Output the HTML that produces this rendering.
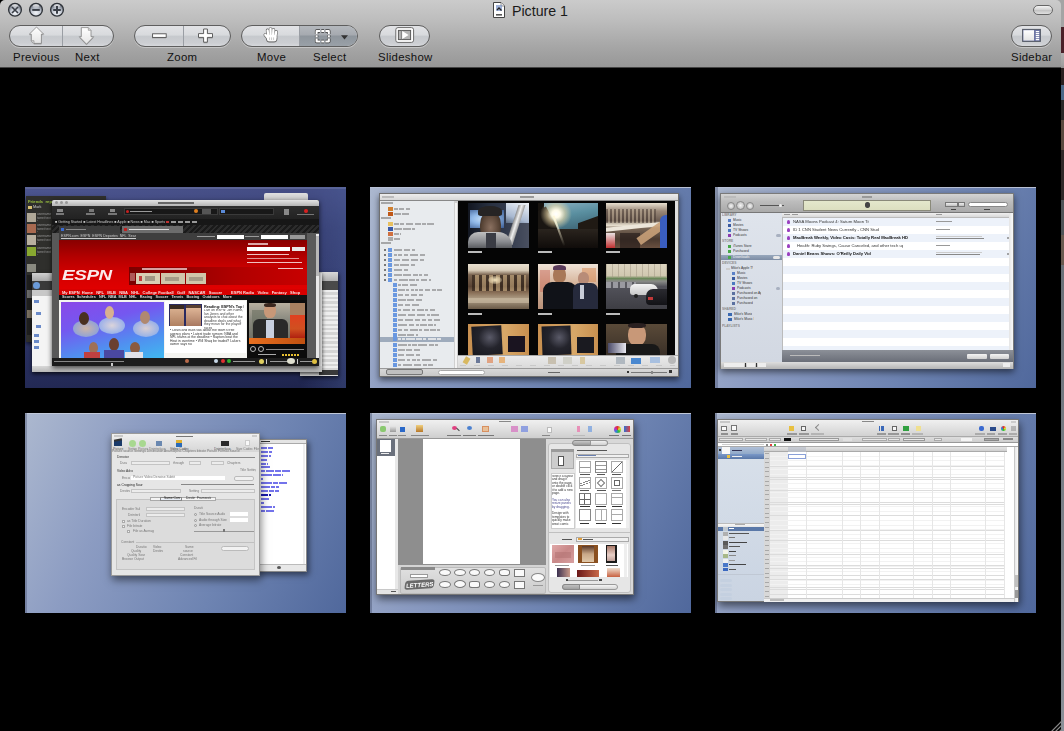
<!DOCTYPE html>
<html><head><meta charset="utf-8">
<style>
*{box-sizing:border-box}
html,body{margin:0;padding:0}
body{width:1064px;height:731px;background:#000;overflow:hidden;position:relative;font-family:"Liberation Sans",sans-serif}
.abs{position:absolute}
#strip{position:absolute;left:1061px;top:0;width:3px;height:731px;background:linear-gradient(#a4a4a4 0,#a4a4a4 27px,#4a2028 27px,#4a2028 53px,#b0b0b0 53px,#a0a0a0 65px,#909090 68px,#2a2020 68px,#2a2020 85px,#4a6888 85px,#4a6888 100px,#2a2828 100px,#2a2828 120px,#5a4a40 120px,#5a4a40 150px,#302828 150px,#302828 200px,#505458 200px,#505458 235px,#6a5a50 235px,#6a5a50 265px,#6a7078 265px,#7a8088 500px,#8a9098 731px)}
#tb{position:absolute;left:0;top:0;width:1061px;height:68px;background:linear-gradient(#cbcbcb,#bdbdbd 30%,#a6a6a6 70%,#979797);border-radius:5px 5px 0 0;border-bottom:1px solid #444}
.tl{position:absolute;top:3px;width:14px;height:14px;border-radius:50%;background:radial-gradient(circle at 50% 35%,#eef0f4 0,#c4c8d0 45%,#8a9098 100%);border:1px solid #555a62;box-shadow:0 1px 0 rgba(255,255,255,.4)}
.title{position:absolute;left:512px;top:2.5px;font-size:14.2px;color:#1a1a1a}
.btn{position:absolute;top:25px;height:22px;border-radius:11px;border:1px solid #5e5e5e;background:linear-gradient(#e2e3e6 0,#d8dadd 46%,#c6c9cd 50%,#ccced2 85%,#d6d8dc 100%);box-shadow:0 1px 0 rgba(255,255,255,.35);overflow:hidden}
.lbl{position:absolute;top:51px;font-size:11.4px;letter-spacing:.3px;color:#111;white-space:nowrap}
.div{position:absolute;top:0;width:1px;height:20px;background:#9a9ea4}
.sel{position:absolute;left:58px;top:0;width:60px;height:20px;background:linear-gradient(#b4b8bd 0,#a6aab0 45%,#8e959c 50%,#9aa1a8 100%)}
.pill{position:absolute;left:1033px;top:5px;width:20px;height:10px;border-radius:5px;border:1px solid #666;background:linear-gradient(#f4f4f4,#d0d0d0 50%,#c4c4c4 55%,#e0e0e0)}
.th{position:absolute;overflow:hidden}
.in{position:absolute;width:1064px;height:731px;filter:blur(.45px)}
.in div{position:absolute}
.in .t{font-size:3px;line-height:3px;white-space:nowrap;overflow:hidden}
</style></head><body>
<div id="strip"></div>
<div style="position:absolute;left:1052px;top:0;width:9px;height:8px;background:#a4a4a4"></div>
<div id="tb">
  <div class="title">Picture 1</div>
  <!-- prev/next -->
  <div class="btn" style="left:9px;width:105px"><div class="div" style="left:52px"></div></div>
  <div class="lbl" style="left:13px">Previous</div>
  <div class="lbl" style="left:75px">Next</div>
  <!-- zoom -->
  <div class="btn" style="left:134px;width:97px"><div class="div" style="left:48px"></div></div>
  <div class="lbl" style="left:167px">Zoom</div>
  <!-- move/select -->
  <div class="btn" style="left:241px;width:117px"><div class="sel"></div><div class="div" style="left:57px"></div></div>
  <div class="lbl" style="left:257px">Move</div>
  <div class="lbl" style="left:313px">Select</div>
  <!-- slideshow -->
  <div class="btn" style="left:379px;width:51px"></div>
  <div class="lbl" style="left:378px">Slideshow</div>
  <!-- sidebar -->
  <div class="btn" style="left:1011px;width:41px"></div>
  <div class="lbl" style="left:1011px">Sidebar</div>
  <div class="pill"></div>
  <svg width="1061" height="68" style="position:absolute;left:0;top:0">
    <defs>
      <radialGradient id="tlg" cx="50%" cy="75%" r="65%">
        <stop offset="0" stop-color="#f2f4f8"/><stop offset=".55" stop-color="#c4cad4"/><stop offset="1" stop-color="#6a707c"/>
      </radialGradient>
      <linearGradient id="hl" x1="0" y1="0" x2="0" y2="1"><stop offset="0" stop-color="#fff" stop-opacity=".95"/><stop offset="1" stop-color="#fff" stop-opacity="0"/></linearGradient>
      <linearGradient id="wf" x1="0" y1="0" x2="0" y2="1"><stop offset="0" stop-color="#ffffff"/><stop offset="1" stop-color="#e4e4e4"/></linearGradient>
    </defs>
    <g stroke="#2e3238" stroke-width="1.3" fill="url(#tlg)">
      <circle cx="15" cy="9.8" r="6.4"/><circle cx="36" cy="9.8" r="6.4"/><circle cx="57" cy="9.8" r="6.4"/>
    </g>
    <g fill="url(#hl)"><ellipse cx="15" cy="6.3" rx="3.2" ry="2"/><ellipse cx="36" cy="6.3" rx="3.2" ry="2"/><ellipse cx="57" cy="6.3" rx="3.2" ry="2"/></g>
    <g stroke="#3a3f47" stroke-width="1.6" stroke-linecap="butt" fill="none">
      <path d="M12 7 L18 13 M18 7 L12 13"/>
      <path d="M32.2 9.9 H39.8" stroke-width="2"/>
      <path d="M53.2 9.9 H60.8 M57 6.1 V13.7" stroke-width="2"/>
    </g>
    <!-- doc icon -->
    <path d="M493.5 2.5 H501 L504.5 6 V17.5 H493.5 Z" fill="#fff" stroke="#444" stroke-width="1"/>
    <path d="M501 2.5 V6 H504.5" fill="#eee" stroke="#666" stroke-width=".7"/>
    <rect x="496" y="5" width="6" height="6" fill="#8aa0d0" opacity=".8"/>
    <path d="M497 10 L499 8 L501.5 10.5" stroke="#222" stroke-width="1.3" fill="none"/>
    <rect x="496" y="14" width="6" height="1.6" fill="#555"/>
    <!-- up arrow -->
    <g transform="translate(0,1)" fill="#7a7a7a" opacity=".55">
      <path d="M36.5 27 L43.7 34.2 H41.4 V43.4 H34 L31.3 40.7 V34.2 H29.3 Z"/>
      <path d="M81.3 27.6 H88.3 L91 30.3 V36.7 H93.7 L86.5 44.2 L79.3 36.7 H81.3 Z"/>
      <rect x="152" y="33.4" width="14" height="4"/>
      <path d="M203.6 29 H207.4 V33.6 H212.5 V37.4 H207.4 V42.2 H203.6 V37.4 H198.5 V33.6 H203.6 Z"/>
    </g>
    <path d="M36.5 27 L43.7 34.2 H41.4 V43.4 H34 L31.3 40.7 V34.2 H29.3 Z" fill="url(#wf)" stroke="#777" stroke-width=".7" stroke-linejoin="round"/>
    <path d="M31.3 40.7 H34 V43.4" fill="#d8d8d8" stroke="#888" stroke-width=".6"/>
    <path d="M81.3 27.6 H88.3 L91 30.3 V36.7 H93.7 L86.5 44.2 L79.3 36.7 H81.3 Z" fill="url(#wf)" stroke="#777" stroke-width=".7" stroke-linejoin="round"/>
    <path d="M88.3 27.6 V30.3 H91" fill="#d8d8d8" stroke="#888" stroke-width=".6"/>
    <!-- minus/plus -->
    <rect x="152.6" y="33.8" width="13.6" height="3.6" fill="#fff" stroke="#505050" stroke-width=".9"/>
    <path d="M203.6 29 H207.4 V33.6 H212.5 V37.4 H207.4 V42.2 H203.6 V37.4 H198.5 V33.6 H203.6 Z" fill="#fff" stroke="#505050" stroke-width=".9" stroke-linejoin="round"/>
    <!-- hand -->
    <g stroke="#6a6a6a" fill="#6a6a6a" stroke-linecap="round">
      <path d="M267.6 30.4 L268.4 37 M270.5 29 L270.7 37 M273.4 29.8 L273 37 M276.2 31.8 L275.2 37.5 M265.3 34.8 L268.4 38.6" stroke-width="3.6" fill="none"/>
      <rect x="266.6" y="34.6" width="10.2" height="7.2" rx="3" stroke-width="1.2"/>
    </g>
    <g stroke="#fff" fill="#fff" stroke-linecap="round">
      <path d="M267.6 30.4 L268.4 37 M270.5 29 L270.7 37 M273.4 29.8 L273 37 M276.2 31.8 L275.2 37.5 M265.3 34.8 L268.4 38.6" stroke-width="2.3" fill="none"/>
      <rect x="266.9" y="35" width="9.6" height="6.4" rx="2.6" stroke="none"/>
    </g>
    <path d="M269.6 37.4 V40 M271.6 37.4 V40 M273.6 37.4 V40" stroke="#b0b0b0" stroke-width=".7"/>
    <path d="M268.2 41.4 H275" stroke="#8a8a8a" stroke-width=".6"/>
    <!-- dashed select -->
    <path d="M316.6 34.0 V31 H320.0 M321.3 31 H324.1 M325.4 31 H328.8 V34.0 M328.8 35.2 V37.3 M328.8 38.5 V41.5 H325.4 M324.1 41.5 H321.3 M320.0 41.5 H316.6 V38.5 M316.6 37.3 V35.2" fill="none" stroke="#3a3a3a" stroke-width="3.4" stroke-linecap="butt" stroke-linejoin="round"/>
    <path d="M316.6 34.0 V31 H320.0 M321.3 31 H324.1 M325.4 31 H328.8 V34.0 M328.8 35.2 V37.3 M328.8 38.5 V41.5 H325.4 M324.1 41.5 H321.3 M320.0 41.5 H316.6 V38.5 M316.6 37.3 V35.2" fill="none" stroke="#fff" stroke-width="2.1" stroke-linecap="butt" stroke-linejoin="round"/>
    <path d="M341 35.3 H348 L344.5 39.4 Z" fill="#333"/>
    <!-- slideshow -->
    <rect x="395.8" y="27.6" width="17.8" height="14.8" rx="2.2" fill="#fff" stroke="#6a6a6a" stroke-width="1"/>
    <rect x="398.4" y="30.4" width="12.2" height="9.2" fill="#b4b4b4" stroke="#5a5a5a" stroke-width="1"/>
    <path d="M401.4 30.4 V39.6" stroke="#777" stroke-width=".8"/>
    <path d="M402.2 31 L408.6 35 L402.2 39 Z" fill="#fff"/>
    <!-- sidebar icon -->
    <rect x="1022.6" y="29.4" width="17.8" height="12" fill="#6c74a4" stroke="#555a66" stroke-width="1"/>
    <rect x="1023.4" y="30.2" width="10.6" height="10.4" fill="url(#wf)"/>
    <g stroke="#fff" stroke-width="1.1"><path d="M1035.8 31.6 H1039.2 M1035.8 33.6 H1039.2 M1035.8 35.6 H1039.2 M1035.8 37.6 H1039.2 M1035.8 39.6 H1039.2"/></g>
  </svg>
</div>

<svg width="14" height="14" style="position:absolute;left:1048px;top:718px"><g stroke="#8a8a8a" stroke-width="1.2"><path d="M3 14 L14 3"/><path d="M7 14 L14 7"/><path d="M11 14 L14 11"/></g></svg>
<div class="th" style="left:25px;top:187px;width:321px;height:201px;background:linear-gradient(175deg,#4d5690 0%,#363e72 30%,#2a3162 70%,#1e244c 100%)">
<div class="in" style="left:-25px;top:-187px">
  <div style="left:25px;top:187px;width:321px;height:2px;background:#5c6496"></div>
  <div style="left:300px;top:187px;width:46px;height:201px;background:linear-gradient(90deg,rgba(80,100,160,0),rgba(80,100,160,.35))"></div>
  <!-- dark twitter window -->
  <div style="left:26px;top:196px;width:80px;height:146px;background:#2f2f2c;box-shadow:0 2px 4px rgba(0,0,0,.6)"></div>
  <div class="t" style="left:28px;top:199px;width:28px;height:5px;font-size:4.2px;line-height:5px;color:#9ac040;font-weight:bold">Friends &nbsp;replies</div>
  <div style="left:28px;top:206px;width:4px;height:3px;background:#d8c070"></div>
  <div class="t" style="left:33px;top:205px;width:16px;height:5px;font-size:3.8px;line-height:5px;color:#ccc">Mark</div>
  <div style="left:27px;top:213px;width:9px;height:9px;background:#b0a898"></div>
  <div style="left:27px;top:224px;width:9px;height:9px;background:#a86a50"></div>
  <div style="left:27px;top:235px;width:9px;height:10px;background:#b8b0a0"></div>
  <div style="left:27px;top:247px;width:9px;height:9px;background:#88a830"></div>
  <div style="left:27px;top:264px;width:9px;height:8px;background:#8a8a80"></div>
  <div class="t" style="left:37px;top:213px;width:16px;height:8px;font-size:3.2px;line-height:3.8px;color:#999;white-space:normal">username tweet text here</div>
  <div class="t" style="left:37px;top:224px;width:16px;height:8px;font-size:3.2px;line-height:3.8px;color:#999;white-space:normal">username tweet text here</div>
  <div class="t" style="left:37px;top:235px;width:16px;height:8px;font-size:3.2px;line-height:3.8px;color:#999;white-space:normal">username tweet text here</div>
  <div class="t" style="left:37px;top:247px;width:16px;height:8px;font-size:3.2px;line-height:3.8px;color:#999;white-space:normal">username tweet text here</div>
  <div style="left:27px;top:275px;width:6px;height:60px;background:#1e1e1e"></div>
  <div style="left:27px;top:290px;width:5px;height:8px;background:#6a6a6a"></div>
  <div style="left:27px;top:310px;width:5px;height:8px;background:#7a7060"></div>
  <!-- small top-right window -->
  <div style="left:264px;top:193px;width:44px;height:10px;background:linear-gradient(#e0e0e0,#bcbcbc);border-radius:2px 2px 0 0"></div>
  <!-- right back window -->
  <div style="left:300px;top:272px;width:38px;height:104px;background:#dcdcdc;box-shadow:1px 2px 4px rgba(0,0,0,.6)"></div>
  <div style="left:300px;top:272px;width:38px;height:9px;background:linear-gradient(#d8d8d8,#b0b0b0)"></div>
  <div style="left:300px;top:281px;width:38px;height:9px;background:#4a4a4a"></div>
  <div style="left:319px;top:290px;width:19px;height:80px;background:repeating-linear-gradient(#eeeeee 0,#eeeeee 2px,#d4d4d4 2px,#d4d4d4 4.5px)"></div>
  <div style="left:319px;top:370px;width:19px;height:5px;background:#3a3a3a"></div>
  <!-- bottom-left white window -->
  <div style="left:32px;top:273px;width:290px;height:99px;background:#e8e8e8;box-shadow:0 2px 4px rgba(0,0,0,.7)"></div>
  <div style="left:32px;top:273px;width:20px;height:8px;background:linear-gradient(#d0d0d0,#a8a8a8)"></div>
  <div style="left:32px;top:281px;width:20px;height:9px;background:#3a3a3a"></div>
  <div style="left:33px;top:282px;width:7px;height:7px;border-radius:50%;background:#6a9ad8"></div>
  <div style="left:32px;top:290px;width:20px;height:6px;background:#c8c8c8"></div>
  <div style="left:32px;top:296px;width:20px;height:74px;background:#f4f4f4"></div>
  <div style="left:34px;top:300px;width:5px;height:3px;background:#6a8ac8"></div>
  <div style="left:36px;top:312px;width:5px;height:3px;background:#6a8ac8"></div>
  <div style="left:36px;top:325px;width:5px;height:3px;background:#6a8ac8"></div>
  <div style="left:34px;top:334px;width:5px;height:3px;background:#6a8ac8"></div>
  <div style="left:34px;top:340px;width:5px;height:3px;background:#6a8ac8"></div>
  <div style="left:34px;top:346px;width:5px;height:3px;background:#6a8ac8"></div>
  <div style="left:32px;top:366px;width:290px;height:6px;background:linear-gradient(#d8d8d8,#b8b8b8)"></div>
  <!-- browser -->
  <div style="left:52px;top:200px;width:267px;height:166px;background:#333;box-shadow:0 2px 5px rgba(0,0,0,.7)"></div>
  <div style="left:52px;top:200px;width:267px;height:6px;background:linear-gradient(#e4e4e4,#b4b4b4);border-radius:2px 2px 0 0"></div>
  <div style="left:55px;top:201px;width:3px;height:3px;border-radius:50%;background:#999"></div>
  <div style="left:60px;top:201px;width:3px;height:3px;border-radius:50%;background:#999"></div>
  <div style="left:65px;top:201px;width:3px;height:3px;border-radius:50%;background:#999"></div>
  <div style="left:158px;top:202px;width:36px;height:2px;background:#666"></div>
  <div style="left:52px;top:206px;width:267px;height:13px;background:linear-gradient(#2e2e2e,#222)"></div>
  <div style="left:57px;top:209px;width:6px;height:3px;background:#888"></div>
  <div style="left:56px;top:213px;width:8px;height:2px;background:#777"></div>
  <div style="left:89px;top:209px;width:5px;height:3px;background:#777"></div>
  <div style="left:86px;top:213px;width:9px;height:2px;background:#777"></div>
  <div style="left:110px;top:209px;width:5px;height:3px;background:#888"></div>
  <div style="left:108px;top:213px;width:9px;height:2px;background:#777"></div>
  <div style="left:124px;top:208px;width:94px;height:7px;background:#181818;border:1px solid #3a3a3a"></div>
  <div style="left:126px;top:210px;width:3px;height:3px;background:#c82020;border-radius:50%"></div>
  <div style="left:130px;top:211px;width:22px;height:1px;background:#999"></div>
  <div style="left:194px;top:209px;width:4px;height:4px;background:#e08020;border-radius:50%"></div>
  <div style="left:202px;top:209px;width:9px;height:5px;background:#555"></div>
  <div style="left:219px;top:208px;width:55px;height:7px;background:#181818;border:1px solid #3a3a3a"></div>
  <div style="left:221px;top:210px;width:4px;height:3px;background:#5a8ad8"></div>
  <div style="left:284px;top:209px;width:5px;height:6px;background:#888"></div>
  <div style="left:304px;top:209px;width:4px;height:4px;background:#d82020;border-radius:50%"></div>
  <div style="left:297px;top:214px;width:17px;height:1px;background:#777"></div>
  <div style="left:52px;top:219px;width:267px;height:6px;background:#171717"></div>
  <div class="t" style="left:55px;top:220px;width:112px;height:5px;font-size:3.6px;line-height:5px;color:#ccc">&#9632; Getting Started &#9632; Latest Headlines &#9632; Apple &#9632; News &#9632; Mac &#9632; Sports &#9632; Music &#9632; ...</div>
  <div style="left:166px;top:221px;width:3px;height:2px;background:#c03030"></div>
  <div style="left:171px;top:221px;width:28px;height:2px;background:repeating-linear-gradient(90deg,#999 0,#999 5px,transparent 5px,transparent 7px)"></div>
  <div style="left:52px;top:225px;width:267px;height:8px;background:repeating-linear-gradient(135deg,#2c2c2c 0,#2c2c2c 2px,#1a1a1a 2px,#1a1a1a 4px)"></div>
  <div style="left:59px;top:226px;width:61px;height:7px;background:#3c3c3c"></div>
  <div style="left:61px;top:228px;width:3px;height:3px;background:#3a6ad0"></div>
  <div style="left:66px;top:229px;width:20px;height:1px;background:#888"></div>
  <div style="left:122px;top:226px;width:61px;height:7px;background:#6c6c6c"></div>
  <div style="left:124px;top:228px;width:3px;height:3px;background:#c02020"></div>
  <div style="left:129px;top:229px;width:40px;height:1px;background:#ddd"></div>
  <div style="left:52px;top:233px;width:7px;height:125px;background:#585858"></div>
  <div style="left:59px;top:233px;width:248px;height:7px;background:#3e3e3e"></div>
  <div class="t" style="left:61px;top:234px;width:75px;height:5px;font-size:3.6px;line-height:5px;color:#ccc;text-decoration:underline">ESPN.com &nbsp;ESPN &nbsp;ESPN Deportes &nbsp;NFL &nbsp;Search ESPN</div>
  <div style="left:217px;top:235px;width:27px;height:4px;background:#fff"></div>
  <div style="left:261px;top:235px;width:27px;height:4px;background:#fff"></div>
  <div style="left:290px;top:235px;width:15px;height:4px;background:#999"></div>
  <div style="left:197px;top:236px;width:18px;height:1px;background:#999"></div>
  <div style="left:245px;top:236px;width:14px;height:1px;background:#999"></div>
  <!-- red header -->
  <div style="left:59px;top:240px;width:248px;height:49px;background:linear-gradient(#880000 0%,#b40000 35%,#d40000 70%,#e00000 100%)"></div>
  <div style="left:62px;top:268px;width:60px;height:14px;color:#fff;font:italic 900 14px/14px 'Liberation Sans',sans-serif;letter-spacing:-0.3px;transform:scaleX(1.35);transform-origin:0 0;opacity:.92">ESPN</div>
  <div style="left:129px;top:267px;width:178px;height:18px;background:linear-gradient(90deg,#7a0000,#b00000 60%,#c80000)"></div>
  <div style="left:142px;top:268px;width:45px;height:2px;background:#e8c8c8;opacity:.8"></div>
  <div style="left:136px;top:273px;width:24px;height:11px;background:#d8cfb4"></div>
  <div style="left:161px;top:273px;width:24px;height:11px;background:#d0c6aa"></div>
  <div style="left:186px;top:273px;width:20px;height:11px;background:#d0c6aa"></div>
  <div style="left:139px;top:276px;width:3px;height:5px;background:#c04040"></div>
  <div style="left:145px;top:276px;width:10px;height:5px;background:#8a8070;opacity:.7"></div>
  <div style="left:165px;top:277px;width:14px;height:4px;background:#8a8070;opacity:.6"></div>
  <div style="left:189px;top:277px;width:14px;height:4px;background:#8a8070;opacity:.6"></div>
  <div style="left:130px;top:273px;width:5px;height:8px;background:#e0b0b0;opacity:.5"></div>
  <div style="left:248px;top:243px;width:20px;height:2px;background:#f0d0d0;opacity:.8"></div>
  <div style="left:247px;top:247px;width:43px;height:4px;background:#fff"></div>
  <div style="left:292px;top:247px;width:13px;height:4px;background:#e8e8e8"></div>
  <div style="left:247px;top:254px;width:42px;height:1px;background:#f0c0c0"></div>
  <div style="left:247px;top:258px;width:52px;height:1px;background:#e09090"></div>
  <div style="left:247px;top:262px;width:55px;height:1px;background:#f0c0c0"></div>
  <div style="left:278px;top:268px;width:25px;height:1px;background:#f0c0c0"></div>
  <!-- nav -->
  <div style="left:59px;top:289px;width:248px;height:6px;background:#d80000"></div>
  <div class="t" style="left:62px;top:290px;width:244px;height:5px;font-size:4px;line-height:5px;color:#f8e0e0;font-weight:bold">My ESPN &nbsp;Home &nbsp;&nbsp;NFL &nbsp;&nbsp;MLB &nbsp;&nbsp;NBA &nbsp;&nbsp;NHL &nbsp;&nbsp;College Football &nbsp;&nbsp;Golf &nbsp;&nbsp;NASCAR &nbsp;&nbsp;Soccer &nbsp;&nbsp;&nbsp;&nbsp;&nbsp;&nbsp;&nbsp;ESPN Radio &nbsp;&nbsp;Video &nbsp;&nbsp;Fantasy &nbsp;&nbsp;Shop</div>
  <div style="left:59px;top:295px;width:248px;height:5px;background:#121212"></div>
  <div class="t" style="left:62px;top:295px;width:244px;height:5px;font-size:3.8px;line-height:5px;color:#ddd;font-weight:bold">Scores &nbsp;Schedules &nbsp;&nbsp;NFL &nbsp;NBA &nbsp;MLB &nbsp;NHL &nbsp;&nbsp;Racing &nbsp;&nbsp;Soccer &nbsp;&nbsp;Tennis &nbsp;&nbsp;Boxing &nbsp;&nbsp;Outdoors &nbsp;&nbsp;More</div>
  <!-- content -->
  <div style="left:59px;top:300px;width:248px;height:58px;background:#f4f4f0"></div>
  <div style="left:61px;top:302px;width:103px;height:56px;background:linear-gradient(165deg,#8a48e8 0%,#7458f0 35%,#5090f0 70%,#40b8f0 100%)"></div>
  <div style="left:73px;top:320px;width:26px;height:17px;border-radius:50%;background:radial-gradient(#d8c0a0,#7aa0e8);opacity:.9"></div>
  <div style="left:99px;top:317px;width:26px;height:17px;border-radius:50%;background:radial-gradient(#e8e0d8,#80a8f0);opacity:.9"></div>
  <div style="left:133px;top:320px;width:26px;height:17px;border-radius:50%;background:radial-gradient(#e8d8d0,#80a8f0);opacity:.9"></div>
  <div style="left:79px;top:312px;width:10px;height:13px;border-radius:50%;background:#4a3020"></div>
  <div style="left:105px;top:306px;width:9px;height:13px;border-radius:50%;background:#d8b090"></div>
  <div style="left:140px;top:311px;width:10px;height:13px;border-radius:50%;background:#b08870"></div>
  <div style="left:89px;top:342px;width:9px;height:12px;border-radius:50%;background:#a07058"></div>
  <div style="left:109px;top:338px;width:10px;height:13px;border-radius:50%;background:#6a4030"></div>
  <div style="left:130px;top:342px;width:10px;height:12px;border-radius:50%;background:#8a5a40"></div>
  <div style="left:104px;top:350px;width:20px;height:8px;background:#4a48a0"></div>
  <div style="left:84px;top:352px;width:16px;height:6px;background:#c04040"></div>
  <div style="left:125px;top:352px;width:18px;height:6px;background:#e0e0e8"></div>
  <div style="left:165px;top:301px;width:81px;height:52px;background:#fff"></div>
  <div style="left:169px;top:304px;width:33px;height:22px;background:#2a2a60"></div>
  <div style="left:170px;top:305px;width:14px;height:21px;background:linear-gradient(#e0b898,#b08060)"></div>
  <div style="left:186px;top:305px;width:15px;height:21px;background:linear-gradient(#e8c0a0,#a87860)"></div>
  <div style="left:170px;top:305px;width:14px;height:4px;background:#3a2a20"></div>
  <div style="left:186px;top:305px;width:15px;height:3px;background:#5a4030"></div>
  <div class="t" style="left:204px;top:304.5px;width:40px;height:5px;font-size:3.8px;line-height:5px;color:#111;font-weight:bold">Reading: ESPN&#39;s Top News</div>
  <div class="t" style="left:204px;top:309px;width:40px;height:20px;font-size:3.4px;line-height:3.6px;color:#444;white-space:normal">Live on ESPN: Jim Rome, Ian Jones and other analysts to chat about the deadline deals and what they mean for the playoff races</div>
  <div class="t" style="left:170px;top:329px;width:74px;height:20px;font-size:3.4px;line-height:3.6px;color:#333;white-space:normal">&#8226; Davis and Bulls talk about the team&#39;s free agency plans &#8226; Latest trade rumors: NBA and NFL teams at the deadline &#8226; Raptors beat the Heat in overtime &#8226; Will Shaq be traded? Lakers owner says no</div>
  <div style="left:247px;top:300px;width:60px;height:59px;background:#0c0c0c"></div>
  <div style="left:249px;top:303px;width:56px;height:41px;background:linear-gradient(#b8b0a0,#8a8a80 40%,#6a6a60)"></div>
  <div style="left:252px;top:310px;width:15px;height:26px;background:#6a7060;opacity:.6"></div>
  <div style="left:264px;top:304px;width:12px;height:14px;border-radius:45%;background:#c89878"></div>
  <div style="left:264px;top:303px;width:12px;height:4px;border-radius:40%;background:#3a2820"></div>
  <div style="left:253px;top:319px;width:35px;height:19px;border-radius:6px 6px 0 0;background:#2a2a2a"></div>
  <div style="left:266px;top:320px;width:8px;height:18px;background:#c8d0e0"></div>
  <div style="left:290px;top:303px;width:15px;height:12px;background:#a88060"></div>
  <div style="left:290px;top:315px;width:15px;height:23px;background:linear-gradient(#e04020,#d05020 60%,#b02010)"></div>
  <div style="left:249px;top:338px;width:56px;height:6px;background:linear-gradient(90deg,#e87020,#c05010)"></div>
  <div style="left:250px;top:346px;width:6px;height:6px;border-radius:50%;border:1px solid #bbb"></div>
  <div style="left:258px;top:346px;width:6px;height:6px;border-radius:50%;border:1px solid #bbb"></div>
  <div style="left:266px;top:349px;width:38px;height:1px;background:#888"></div>
  <div style="left:258px;top:354px;width:18px;height:1px;background:#aaa"></div>
  <div style="left:282px;top:354px;width:17px;height:2px;background:repeating-linear-gradient(90deg,#e8c030 0,#e8c030 2px,transparent 2px,transparent 3px)"></div>
  <div style="left:307px;top:233px;width:12px;height:125px;background:#5a5a5a"></div>
  <div style="left:316px;top:234px;width:3px;height:124px;background:#e8e8e8"></div>
  <div style="left:316px;top:236px;width:3px;height:40px;background:#b8b8b8"></div>
  <!-- status bar -->
  <div style="left:52px;top:358px;width:267px;height:8px;background:#1c1c1c"></div>
  <div style="left:54px;top:361px;width:70px;height:1px;background:#888"></div>
  <div style="left:111px;top:363px;width:2px;height:3px;background:#ccc"></div>
  <div style="left:185px;top:359px;width:4px;height:4px;border-radius:50%;background:#b86a4a"></div>
  <div style="left:214px;top:359px;width:4px;height:4px;border-radius:50%;background:#c8d8e8"></div>
  <div style="left:221px;top:359px;width:4px;height:4px;border-radius:50%;background:#e03030"></div>
  <div style="left:227px;top:359px;width:4px;height:4px;border-radius:50%;background:#30b030"></div>
  <div style="left:233px;top:361px;width:22px;height:1px;background:#999"></div>
  <div style="left:259px;top:359px;width:5px;height:5px;border-radius:50%;background:#e0d060"></div>
  <div style="left:266px;top:359px;width:1px;height:5px;background:#ccc"></div>
  <div style="left:270px;top:361px;width:18px;height:1px;background:#999"></div>
  <div style="left:287px;top:358px;width:8px;height:6px;border-radius:50%;background:#e0e0d0"></div>
  <div style="left:297px;top:359px;width:1px;height:5px;background:#ccc"></div>
  <div style="left:300px;top:361px;width:12px;height:1px;background:#999"></div>
  <div style="left:312px;top:359px;width:5px;height:5px;border-radius:50%;background:#e0c040"></div>
</div></div>

<div class="th" style="left:370px;top:187px;width:321px;height:201px;background:linear-gradient(115deg,#acb8cf 0%,#8c9cc2 30%,#6e84b2 65%,#50689c 100%)">
<div class="in" style="left:-370px;top:-187px">
  <div style="left:370px;top:187px;width:321px;height:1px;background:#b8c0d4"></div>
  <!-- window -->
  <div style="left:379px;top:193px;width:300px;height:184px;background:#d8d8d8;border:1px solid #707070;box-shadow:0 3px 6px rgba(0,0,0,.55)"></div>
  <div style="left:380px;top:194px;width:298px;height:7px;background:linear-gradient(#ececec,#d4d4d4)"></div>
  <div style="left:382px;top:196px;width:12px;height:2px;background:#bbb"></div>
  <div style="left:520px;top:196px;width:14px;height:2px;background:#999"></div>
  <div style="left:380px;top:200px;width:298px;height:1px;background:#888"></div>
  <!-- sidebar -->
  <div style="left:380px;top:201px;width:77px;height:167px;background:#e8ebee"></div>
  <div style="left:454px;top:201px;width:4px;height:167px;background:#d0d0d0"></div>
  <div style="left:455px;top:203px;width:2px;height:165px;background:#f4f4f4"></div>
  <div style="left:381px;top:202px;width:12px;height:2px;background:#8a8a8a;opacity:.7"></div>
  <div style="left:381px;top:217px;width:10px;height:2px;background:#8a8a8a;opacity:.7"></div>
  <div style="left:381px;top:242px;width:10px;height:2px;background:#8a8a8a;opacity:.7"></div>
  <div style="left:388px;top:207px;width:5px;height:4px;background:#d08030"></div>
  <div style="left:394px;top:208px;width:4px;height:2px;background:#6a6a6a;opacity:.5"></div>
  <div style="left:399px;top:208px;width:5px;height:2px;background:#6a6a6a;opacity:.5"></div>
  <div style="left:406px;top:208px;width:4px;height:2px;background:#6a6a6a;opacity:.5"></div>
  <div style="left:388px;top:212px;width:5px;height:4px;background:#c05818"></div>
  <div style="left:394px;top:213px;width:7px;height:2px;background:#6a6a6a;opacity:.5"></div>
  <div style="left:402px;top:213px;width:7px;height:2px;background:#6a6a6a;opacity:.5"></div>
  <div style="left:388px;top:222px;width:5px;height:4px;background:#e8c060"></div>
  <div style="left:394px;top:223px;width:5px;height:2px;background:#6a6a6a;opacity:.5"></div>
  <div style="left:400px;top:223px;width:4px;height:2px;background:#6a6a6a;opacity:.5"></div>
  <div style="left:406px;top:223px;width:7px;height:2px;background:#6a6a6a;opacity:.5"></div>
  <div style="left:415px;top:223px;width:6px;height:2px;background:#6a6a6a;opacity:.5"></div>
  <div style="left:422px;top:223px;width:4px;height:2px;background:#6a6a6a;opacity:.5"></div>
  <div style="left:427px;top:223px;width:7px;height:2px;background:#6a6a6a;opacity:.5"></div>
  <div style="left:388px;top:227px;width:5px;height:4px;background:#3a5aa8"></div>
  <div style="left:394px;top:228px;width:8px;height:2px;background:#6a6a6a;opacity:.5"></div>
  <div style="left:403px;top:228px;width:8px;height:2px;background:#6a6a6a;opacity:.5"></div>
  <div style="left:412px;top:228px;width:3px;height:2px;background:#6a6a6a;opacity:.5"></div>
  <div style="left:388px;top:232px;width:5px;height:4px;background:#d07040"></div>
  <div style="left:394px;top:233px;width:5px;height:2px;background:#6a6a6a;opacity:.5"></div>
  <div style="left:400px;top:233px;width:1px;height:2px;background:#6a6a6a;opacity:.5"></div>
  <div style="left:388px;top:237px;width:5px;height:4px;background:#aaa"></div>
  <div style="left:394px;top:238px;width:6px;height:2px;background:#6a6a6a;opacity:.5"></div>
  <div style="left:384px;top:249px;width:2px;height:2px;background:#777"></div>
  <div style="left:388px;top:248px;width:4px;height:4px;background:#6a98e0"></div>
  <div style="left:394px;top:249px;width:8px;height:2px;background:#6a6a6a;opacity:.5"></div>
  <div style="left:404px;top:249px;width:6px;height:2px;background:#6a6a6a;opacity:.5"></div>
  <div style="left:412px;top:249px;width:3px;height:2px;background:#6a6a6a;opacity:.5"></div>
  <div style="left:384px;top:254px;width:2px;height:2px;background:#777"></div>
  <div style="left:388px;top:253px;width:4px;height:4px;background:#6a98e0"></div>
  <div style="left:394px;top:254px;width:3px;height:2px;background:#6a6a6a;opacity:.5"></div>
  <div style="left:398px;top:254px;width:4px;height:2px;background:#6a6a6a;opacity:.5"></div>
  <div style="left:404px;top:254px;width:4px;height:2px;background:#6a6a6a;opacity:.5"></div>
  <div style="left:410px;top:254px;width:8px;height:2px;background:#6a6a6a;opacity:.5"></div>
  <div style="left:420px;top:254px;width:5px;height:2px;background:#6a6a6a;opacity:.5"></div>
  <div style="left:384px;top:259px;width:2px;height:2px;background:#777"></div>
  <div style="left:388px;top:258px;width:4px;height:4px;background:#6a98e0"></div>
  <div style="left:394px;top:259px;width:6px;height:2px;background:#6a6a6a;opacity:.5"></div>
  <div style="left:402px;top:259px;width:7px;height:2px;background:#6a6a6a;opacity:.5"></div>
  <div style="left:411px;top:259px;width:7px;height:2px;background:#6a6a6a;opacity:.5"></div>
  <div style="left:420px;top:259px;width:4px;height:2px;background:#6a6a6a;opacity:.5"></div>
  <div style="left:384px;top:264px;width:2px;height:2px;background:#777"></div>
  <div style="left:388px;top:263px;width:4px;height:4px;background:#6a98e0"></div>
  <div style="left:394px;top:264px;width:5px;height:2px;background:#6a6a6a;opacity:.5"></div>
  <div style="left:400px;top:264px;width:9px;height:2px;background:#6a6a6a;opacity:.5"></div>
  <div style="left:411px;top:264px;width:4px;height:2px;background:#6a6a6a;opacity:.5"></div>
  <div style="left:384px;top:269px;width:2px;height:2px;background:#777"></div>
  <div style="left:388px;top:268px;width:4px;height:4px;background:#6a98e0"></div>
  <div style="left:394px;top:269px;width:8px;height:2px;background:#6a6a6a;opacity:.5"></div>
  <div style="left:404px;top:269px;width:4px;height:2px;background:#6a6a6a;opacity:.5"></div>
  <div style="left:384px;top:274px;width:2px;height:2px;background:#777"></div>
  <div style="left:388px;top:273px;width:4px;height:4px;background:#6a98e0"></div>
  <div style="left:394px;top:274px;width:8px;height:2px;background:#6a6a6a;opacity:.5"></div>
  <div style="left:403px;top:274px;width:8px;height:2px;background:#6a6a6a;opacity:.5"></div>
  <div style="left:413px;top:274px;width:5px;height:2px;background:#6a6a6a;opacity:.5"></div>
  <div style="left:419px;top:274px;width:3px;height:2px;background:#6a6a6a;opacity:.5"></div>
  <div style="left:424px;top:274px;width:4px;height:2px;background:#6a6a6a;opacity:.5"></div>
  <div style="left:384px;top:279px;width:2px;height:2px;background:#777"></div>
  <div style="left:388px;top:278px;width:4px;height:4px;background:#6a98e0"></div>
  <div style="left:394px;top:279px;width:3px;height:2px;background:#6a6a6a;opacity:.5"></div>
  <div style="left:399px;top:279px;width:9px;height:2px;background:#6a6a6a;opacity:.5"></div>
  <div style="left:409px;top:279px;width:6px;height:2px;background:#6a6a6a;opacity:.5"></div>
  <div style="left:416px;top:279px;width:3px;height:2px;background:#6a6a6a;opacity:.5"></div>
  <div style="left:421px;top:279px;width:6px;height:2px;background:#6a6a6a;opacity:.5"></div>
  <div style="left:429px;top:279px;width:2px;height:2px;background:#6a6a6a;opacity:.5"></div>
  <div style="left:393px;top:283px;width:4px;height:4px;background:#6a98e0"></div>
  <div style="left:398px;top:284px;width:3px;height:2px;background:#6a6a6a;opacity:.5"></div>
  <div style="left:402px;top:284px;width:6px;height:2px;background:#6a6a6a;opacity:.5"></div>
  <div style="left:410px;top:284px;width:7px;height:2px;background:#6a6a6a;opacity:.5"></div>
  <div style="left:393px;top:288px;width:4px;height:4px;background:#6a98e0"></div>
  <div style="left:398px;top:289px;width:7px;height:2px;background:#6a6a6a;opacity:.5"></div>
  <div style="left:406px;top:289px;width:3px;height:2px;background:#6a6a6a;opacity:.5"></div>
  <div style="left:411px;top:289px;width:3px;height:2px;background:#6a6a6a;opacity:.5"></div>
  <div style="left:415px;top:289px;width:3px;height:2px;background:#6a6a6a;opacity:.5"></div>
  <div style="left:419px;top:289px;width:4px;height:2px;background:#6a6a6a;opacity:.5"></div>
  <div style="left:425px;top:289px;width:5px;height:2px;background:#6a6a6a;opacity:.5"></div>
  <div style="left:432px;top:289px;width:4px;height:2px;background:#6a6a6a;opacity:.5"></div>
  <div style="left:437px;top:289px;width:5px;height:2px;background:#6a6a6a;opacity:.5"></div>
  <div style="left:393px;top:293px;width:4px;height:4px;background:#6a98e0"></div>
  <div style="left:398px;top:294px;width:5px;height:2px;background:#6a6a6a;opacity:.5"></div>
  <div style="left:405px;top:294px;width:4px;height:2px;background:#6a6a6a;opacity:.5"></div>
  <div style="left:411px;top:294px;width:6px;height:2px;background:#6a6a6a;opacity:.5"></div>
  <div style="left:419px;top:294px;width:4px;height:2px;background:#6a6a6a;opacity:.5"></div>
  <div style="left:393px;top:298px;width:4px;height:4px;background:#6a98e0"></div>
  <div style="left:398px;top:299px;width:8px;height:2px;background:#6a6a6a;opacity:.5"></div>
  <div style="left:407px;top:299px;width:7px;height:2px;background:#6a6a6a;opacity:.5"></div>
  <div style="left:416px;top:299px;width:6px;height:2px;background:#6a6a6a;opacity:.5"></div>
  <div style="left:393px;top:303px;width:4px;height:4px;background:#6a98e0"></div>
  <div style="left:398px;top:304px;width:5px;height:2px;background:#6a6a6a;opacity:.5"></div>
  <div style="left:405px;top:304px;width:5px;height:2px;background:#6a6a6a;opacity:.5"></div>
  <div style="left:412px;top:304px;width:7px;height:2px;background:#6a6a6a;opacity:.5"></div>
  <div style="left:393px;top:308px;width:4px;height:4px;background:#6a98e0"></div>
  <div style="left:398px;top:309px;width:3px;height:2px;background:#6a6a6a;opacity:.5"></div>
  <div style="left:403px;top:309px;width:7px;height:2px;background:#6a6a6a;opacity:.5"></div>
  <div style="left:412px;top:309px;width:3px;height:2px;background:#6a6a6a;opacity:.5"></div>
  <div style="left:417px;top:309px;width:7px;height:2px;background:#6a6a6a;opacity:.5"></div>
  <div style="left:425px;top:309px;width:3px;height:2px;background:#6a6a6a;opacity:.5"></div>
  <div style="left:430px;top:309px;width:5px;height:2px;background:#6a6a6a;opacity:.5"></div>
  <div style="left:393px;top:313px;width:4px;height:4px;background:#6a98e0"></div>
  <div style="left:398px;top:314px;width:8px;height:2px;background:#6a6a6a;opacity:.5"></div>
  <div style="left:408px;top:314px;width:7px;height:2px;background:#6a6a6a;opacity:.5"></div>
  <div style="left:417px;top:314px;width:8px;height:2px;background:#6a6a6a;opacity:.5"></div>
  <div style="left:427px;top:314px;width:3px;height:2px;background:#6a6a6a;opacity:.5"></div>
  <div style="left:431px;top:314px;width:8px;height:2px;background:#6a6a6a;opacity:.5"></div>
  <div style="left:393px;top:318px;width:4px;height:4px;background:#6a98e0"></div>
  <div style="left:398px;top:319px;width:5px;height:2px;background:#6a6a6a;opacity:.5"></div>
  <div style="left:405px;top:319px;width:8px;height:2px;background:#6a6a6a;opacity:.5"></div>
  <div style="left:415px;top:319px;width:5px;height:2px;background:#6a6a6a;opacity:.5"></div>
  <div style="left:422px;top:319px;width:4px;height:2px;background:#6a6a6a;opacity:.5"></div>
  <div style="left:428px;top:319px;width:4px;height:2px;background:#6a6a6a;opacity:.5"></div>
  <div style="left:434px;top:319px;width:6px;height:2px;background:#6a6a6a;opacity:.5"></div>
  <div style="left:393px;top:323px;width:4px;height:4px;background:#6a98e0"></div>
  <div style="left:398px;top:324px;width:9px;height:2px;background:#6a6a6a;opacity:.5"></div>
  <div style="left:409px;top:324px;width:5px;height:2px;background:#6a6a6a;opacity:.5"></div>
  <div style="left:416px;top:324px;width:3px;height:2px;background:#6a6a6a;opacity:.5"></div>
  <div style="left:420px;top:324px;width:7px;height:2px;background:#6a6a6a;opacity:.5"></div>
  <div style="left:428px;top:324px;width:5px;height:2px;background:#6a6a6a;opacity:.5"></div>
  <div style="left:434px;top:324px;width:2px;height:2px;background:#6a6a6a;opacity:.5"></div>
  <div style="left:393px;top:328px;width:4px;height:4px;background:#6a98e0"></div>
  <div style="left:398px;top:329px;width:4px;height:2px;background:#6a6a6a;opacity:.5"></div>
  <div style="left:404px;top:329px;width:4px;height:2px;background:#6a6a6a;opacity:.5"></div>
  <div style="left:410px;top:329px;width:8px;height:2px;background:#6a6a6a;opacity:.5"></div>
  <div style="left:419px;top:329px;width:3px;height:2px;background:#6a6a6a;opacity:.5"></div>
  <div style="left:424px;top:329px;width:5px;height:2px;background:#6a6a6a;opacity:.5"></div>
  <div style="left:430px;top:329px;width:6px;height:2px;background:#6a6a6a;opacity:.5"></div>
  <div style="left:437px;top:329px;width:3px;height:2px;background:#6a6a6a;opacity:.5"></div>
  <div style="left:393px;top:333px;width:4px;height:4px;background:#6a98e0"></div>
  <div style="left:398px;top:334px;width:8px;height:2px;background:#6a6a6a;opacity:.5"></div>
  <div style="left:407px;top:334px;width:7px;height:2px;background:#6a6a6a;opacity:.5"></div>
  <div style="left:416px;top:334px;width:2px;height:2px;background:#6a6a6a;opacity:.5"></div>
  <div style="left:393px;top:343px;width:4px;height:4px;background:#6a98e0"></div>
  <div style="left:398px;top:344px;width:9px;height:2px;background:#6a6a6a;opacity:.5"></div>
  <div style="left:408px;top:344px;width:3px;height:2px;background:#6a6a6a;opacity:.5"></div>
  <div style="left:412px;top:344px;width:5px;height:2px;background:#6a6a6a;opacity:.5"></div>
  <div style="left:418px;top:344px;width:9px;height:2px;background:#6a6a6a;opacity:.5"></div>
  <div style="left:429px;top:344px;width:5px;height:2px;background:#6a6a6a;opacity:.5"></div>
  <div style="left:435px;top:344px;width:3px;height:2px;background:#6a6a6a;opacity:.5"></div>
  <div style="left:393px;top:348px;width:4px;height:4px;background:#6a98e0"></div>
  <div style="left:398px;top:349px;width:7px;height:2px;background:#6a6a6a;opacity:.5"></div>
  <div style="left:406px;top:349px;width:6px;height:2px;background:#6a6a6a;opacity:.5"></div>
  <div style="left:414px;top:349px;width:6px;height:2px;background:#6a6a6a;opacity:.5"></div>
  <div style="left:393px;top:353px;width:4px;height:4px;background:#6a98e0"></div>
  <div style="left:398px;top:354px;width:6px;height:2px;background:#6a6a6a;opacity:.5"></div>
  <div style="left:406px;top:354px;width:8px;height:2px;background:#6a6a6a;opacity:.5"></div>
  <div style="left:416px;top:354px;width:4px;height:2px;background:#6a6a6a;opacity:.5"></div>
  <div style="left:393px;top:358px;width:4px;height:4px;background:#6a98e0"></div>
  <div style="left:398px;top:359px;width:7px;height:2px;background:#6a6a6a;opacity:.5"></div>
  <div style="left:407px;top:359px;width:3px;height:2px;background:#6a6a6a;opacity:.5"></div>
  <div style="left:412px;top:359px;width:4px;height:2px;background:#6a6a6a;opacity:.5"></div>
  <div style="left:417px;top:359px;width:3px;height:2px;background:#6a6a6a;opacity:.5"></div>
  <div style="left:422px;top:359px;width:9px;height:2px;background:#6a6a6a;opacity:.5"></div>
  <div style="left:433px;top:359px;width:4px;height:2px;background:#6a6a6a;opacity:.5"></div>
  <div style="left:393px;top:363px;width:4px;height:4px;background:#6a98e0"></div>
  <div style="left:398px;top:364px;width:3px;height:2px;background:#6a6a6a;opacity:.5"></div>
  <div style="left:403px;top:364px;width:9px;height:2px;background:#6a6a6a;opacity:.5"></div>
  <div style="left:414px;top:364px;width:7px;height:2px;background:#6a6a6a;opacity:.5"></div>
  <div style="left:423px;top:364px;width:4px;height:2px;background:#6a6a6a;opacity:.5"></div>
  <div style="left:428px;top:364px;width:5px;height:2px;background:#6a6a6a;opacity:.5"></div>
  <div style="left:380px;top:337px;width:74px;height:5px;background:#9eabbc"></div>
  <div style="left:393px;top:337px;width:4px;height:4px;background:#6a98e0"></div>
  <div style="left:398px;top:338px;width:3px;height:2px;background:#f4f4f4;opacity:.75"></div>
  <div style="left:402px;top:338px;width:3px;height:2px;background:#f4f4f4;opacity:.75"></div>
  <div style="left:406px;top:338px;width:9px;height:2px;background:#f4f4f4;opacity:.75"></div>
  <div style="left:416px;top:338px;width:6px;height:2px;background:#f4f4f4;opacity:.75"></div>
  <div style="left:423px;top:338px;width:3px;height:2px;background:#f4f4f4;opacity:.75"></div>
  <div style="left:428px;top:338px;width:8px;height:2px;background:#f4f4f4;opacity:.75"></div>
  <div style="left:437px;top:338px;width:4px;height:2px;background:#f4f4f4;opacity:.75"></div>
  <!-- black main -->
  <div style="left:458px;top:201px;width:217px;height:154px;background:#050505"></div>
  <div style="left:675px;top:201px;width:3px;height:154px;background:#e0e0e0"></div>
  <!-- row 1 photos -->
  <div style="left:468px;top:203px;width:61px;height:45px;background:linear-gradient(90deg,#121620 0%,#283040 35%,#30384a 60%,#4a5060 100%);overflow:hidden">
    <div style="left:2px;top:7px;width:34px;height:18px;background:radial-gradient(ellipse at 40% 50%,#c8e0f8 0%,#90b8e8 40%,#3a5a90 100%)"></div>
    <div style="left:38px;top:0px;width:23px;height:20px;background:linear-gradient(200deg,#f0f4f8,#a8b8d0 70%,#5a6a80)"></div>
    <div style="left:44px;top:2px;width:7px;height:40px;background:linear-gradient(90deg,#8a8a8a,#f0f0f0,#9a9a9a);transform:skewX(-18deg)"></div>
    <div style="left:12px;top:8px;width:21px;height:30px;border-radius:45%;background:radial-gradient(ellipse at 50% 55%,#8a7060 0%,#5a4638 55%,#2a2018 100%)"></div>
    <div style="left:10px;top:3px;width:24px;height:10px;border-radius:50% 50% 20% 20%;background:#262424"></div>
    <div style="left:0px;top:29px;width:44px;height:16px;border-radius:10px 14px 0 0;background:linear-gradient(#c0c0c0,#8a8c90 60%,#5a5c60)"></div>
    <div style="left:18px;top:30px;width:10px;height:15px;background:#3a3c44"></div>
  </div>
  <div style="left:468px;top:251px;width:14px;height:2px;background:#bbb"></div>
  <div style="left:538px;top:203px;width:60px;height:45px;background:#16120e;overflow:hidden">
    <div style="left:6px;top:0px;width:54px;height:26px;background:linear-gradient(170deg,#8ab0c0 0%,#5a8fa0 45%,#3a6070 100%)"></div>
    <div style="left:-10px;top:8px;width:34px;height:60px;background:#1a1612;transform:rotate(-28deg)"></div>
    <div style="left:40px;top:16px;width:24px;height:14px;background:#201a14;transform:skewY(-20deg)"></div>
    <div style="left:0px;top:26px;width:60px;height:19px;background:linear-gradient(#2a241e,#100c0a)"></div>
    <div style="left:2px;top:-4px;width:32px;height:30px;border-radius:50%;background:radial-gradient(#ffffff 0%,#fffbe8 18%,rgba(240,220,170,.6) 40%,rgba(200,180,140,0) 70%)"></div>
    <div style="left:20px;top:12px;width:2px;height:32px;background:linear-gradient(#fff8d8,rgba(255,240,200,0));transform:rotate(-20deg)"></div>
  </div>
  <div style="left:538px;top:251px;width:14px;height:2px;background:#bbb"></div>
  <div style="left:606px;top:203px;width:61px;height:45px;background:linear-gradient(#e8e0d0 0%,#9a8878 18%,#6a5a50 40%,#cfc6b6 46%,#e4dccc 50%,#7a6858 56%,#4a3a30 80%,#6a5040 100%);overflow:hidden">
    <div style="left:0px;top:6px;width:50px;height:14px;background:repeating-linear-gradient(90deg,#3a2e28 0,#3a2e28 2px,#b8a890 2px,#b8a890 4px);opacity:.45"></div>
    <div style="left:-4px;top:22px;width:60px;height:4px;background:#ece6da;transform:rotate(-6deg)"></div>
    <div style="left:0px;top:30px;width:9px;height:15px;background:linear-gradient(#e8e0e0,#c03030)"></div>
    <div style="left:14px;top:30px;width:20px;height:15px;background:#2a201c;opacity:.7"></div>
    <div style="left:30px;top:26px;width:30px;height:8px;background:#c8a078;transform:rotate(-35deg);opacity:.9"></div>
    <div style="left:54px;top:12px;width:8px;height:33px;border-radius:6px 0 0 0;background:#3a5ec0"></div>
  </div>
  <div style="left:606px;top:251px;width:14px;height:2px;background:#bbb"></div>
  <!-- row 2 -->
  <div style="left:468px;top:264px;width:61px;height:45px;background:linear-gradient(#e8e0d0 0%,#d8ccb8 14%,#7a6450 24%,#5a4434 50%,#8a7058 64%,#b0a088 78%,#6a5a48 100%);overflow:hidden">
    <div style="left:4px;top:11px;width:54px;height:16px;background:repeating-linear-gradient(90deg,rgba(40,28,20,.6) 0,rgba(40,28,20,.6) 3px,rgba(220,190,140,.45) 3px,rgba(220,190,140,.45) 7px)"></div>
    <div style="left:20px;top:12px;width:14px;height:8px;border-radius:50%;background:radial-gradient(#f8e8c0,rgba(220,180,120,0))"></div>
    <div style="left:0px;top:34px;width:61px;height:5px;background:#c8b8a0;opacity:.7"></div>
  </div>
  <div style="left:468px;top:313px;width:14px;height:2px;background:#bbb"></div>
  <div style="left:538px;top:264px;width:60px;height:45px;background:linear-gradient(#f0e4d8 0%,#d8b8a0 40%,#b89078 100%);overflow:hidden">
    <div style="left:2px;top:6px;width:10px;height:22px;background:#c86858;opacity:.5"></div>
    <div style="left:44px;top:4px;width:14px;height:14px;background:#d88850;opacity:.5"></div>
    <div style="left:15px;top:3px;width:13px;height:16px;border-radius:45%;background:#a87858"></div>
    <div style="left:15px;top:1px;width:13px;height:5px;border-radius:50% 50% 10% 10%;background:#5a3a5a"></div>
    <div style="left:5px;top:18px;width:34px;height:27px;border-radius:9px 9px 0 0;background:#101218"></div>
    <div style="left:40px;top:8px;width:11px;height:13px;border-radius:45%;background:#b88c78"></div>
    <div style="left:35px;top:19px;width:25px;height:26px;border-radius:7px 7px 0 0;background:#262a3c"></div>
    <div style="left:42px;top:21px;width:4px;height:14px;background:#c8ccd8"></div>
  </div>
  <div style="left:538px;top:313px;width:14px;height:2px;background:#bbb"></div>
  <div style="left:606px;top:264px;width:61px;height:45px;background:linear-gradient(#dcd4c0 0%,#d0c8b0 26%,#6a8858 32%,#8a8c88 38%,#52525a 50%,#3e3e44 100%);overflow:hidden">
    <div style="left:0px;top:0px;width:61px;height:14px;background:repeating-linear-gradient(90deg,rgba(160,150,130,.5) 0,rgba(160,150,130,.5) 1px,transparent 1px,transparent 6px)"></div>
    <div style="left:0px;top:18px;width:30px;height:6px;background:repeating-linear-gradient(90deg,#9a9aa0 0,#9a9aa0 5px,#5a5a60 5px,#5a5a60 7px)"></div>
    <div style="left:24px;top:20px;width:28px;height:11px;border-radius:5px 7px 3px 3px;background:linear-gradient(#f4f4f4,#c8c8c8)"></div>
    <div style="left:28px;top:30px;width:4px;height:4px;border-radius:50%;background:#222"></div>
    <div style="left:40px;top:25px;width:21px;height:16px;border-radius:7px 0 0 4px;background:linear-gradient(#2a2a30,#121216)"></div>
    <div style="left:42px;top:33px;width:5px;height:3px;background:#c03838"></div>
  </div>
  <div style="left:606px;top:313px;width:14px;height:2px;background:#bbb"></div>
  <!-- row 3 -->
  <div style="left:468px;top:324px;width:61px;height:31px;background:linear-gradient(90deg,#c89050,#d8a868 60%,#c89050)"></div>
  <div style="left:472px;top:326px;width:30px;height:29px;background:radial-gradient(ellipse at 60% 40%,#5a5a68 0%,#24242c 45%,#16161c 100%);transform:rotate(-3deg)"></div>
  <div style="left:508px;top:336px;width:17px;height:16px;background:#1a1420"></div>
  <div style="left:538px;top:324px;width:60px;height:31px;background:linear-gradient(90deg,#c89050,#d8a868 60%,#c89050)"></div>
  <div style="left:542px;top:326px;width:29px;height:29px;background:radial-gradient(ellipse at 60% 40%,#5a5a68 0%,#24242c 45%,#16161c 100%);transform:rotate(-2deg)"></div>
  <div style="left:577px;top:337px;width:17px;height:16px;background:#1a1a20"></div>
  <div style="left:606px;top:324px;width:61px;height:31px;background:linear-gradient(#5a4a38,#3a3028)"></div>
  <div style="left:628px;top:324px;width:18px;height:22px;border-radius:45%;background:#c89878"></div>
  <div style="left:628px;top:323px;width:18px;height:5px;border-radius:40%;background:#2a2020"></div>
  <div style="left:616px;top:344px;width:44px;height:11px;border-radius:8px 8px 0 0;background:#181818"></div>
  <div style="left:608px;top:343px;width:18px;height:10px;background:linear-gradient(90deg,#4a4a68,#e8e8f0)"></div>
  <!-- bottom toolbar -->
  <div style="left:458px;top:355px;width:220px;height:13px;background:linear-gradient(#ececec,#dadada)"></div>
  <div style="left:458px;top:355px;width:220px;height:1px;background:#aaa"></div>
  <div style="left:464px;top:357px;width:5px;height:7px;background:#d8b860;transform:rotate(30deg)"></div>
  <div style="left:476px;top:357px;width:4px;height:6px;background:#6a7898"></div>
  <div style="left:487px;top:357px;width:6px;height:6px;background:#e08858;opacity:.7"></div>
  <div style="left:499px;top:357px;width:6px;height:6px;background:#e8a050;opacity:.7"></div>
  <div style="left:548px;top:357px;width:8px;height:7px;background:#c8c0b0"></div>
  <div style="left:563px;top:357px;width:9px;height:7px;background:#d0d0c8"></div>
  <div style="left:580px;top:357px;width:5px;height:7px;background:#d8c8a0"></div>
  <div style="left:616px;top:357px;width:9px;height:7px;background:#b0b8c0"></div>
  <div style="left:631px;top:358px;width:10px;height:6px;background:#4a88d0"></div>
  <div style="left:650px;top:357px;width:10px;height:6px;background:#a8c0e0"></div>
  <div style="left:668px;top:356px;width:8px;height:8px;border-radius:50%;background:#b8b8b8"></div>
  <div style="left:460px;top:365px;width:215px;height:1px;background:repeating-linear-gradient(90deg,#bbb 0,#bbb 6px,transparent 6px,transparent 14px);opacity:.6"></div>
  <!-- status bar -->
  <div style="left:380px;top:368px;width:298px;height:8px;background:linear-gradient(#d8d8d8,#c8c8c8);border-top:1px solid #999"></div>
  <div style="left:386px;top:369px;width:37px;height:6px;background:#c0c0c0;border:1px solid #777;border-radius:2px"></div>
  <div style="left:438px;top:370px;width:47px;height:5px;background:#fff;border-radius:3px;border:1px solid #aaa"></div>
  <div style="left:548px;top:372px;width:12px;height:1px;background:#666"></div>
  <div style="left:627px;top:371px;width:2px;height:2px;background:#333"></div>
  <div style="left:631px;top:372px;width:36px;height:1px;background:#777"></div>
  <div style="left:651px;top:371px;width:2px;height:3px;background:#eee;border:1px solid #888"></div>
  <div style="left:669px;top:370px;width:3px;height:3px;background:#333"></div>
</div></div>

<div class="th" style="left:715px;top:187px;width:321px;height:201px;background:linear-gradient(115deg,#acb8cf 0%,#8c9cc2 30%,#6e84b2 65%,#50689c 100%)">
<div class="in" style="left:-715px;top:-187px">
  <div style="left:715px;top:187px;width:321px;height:1px;background:#b8c0d4"></div>
  <div style="left:715px;top:187px;width:3px;height:201px;background:rgba(60,70,100,.35)"></div>
  <!-- window -->
  <div style="left:720px;top:193px;width:294px;height:176px;background:#d8dde6;border:1px solid #7a7a7a;box-shadow:0 3px 7px rgba(0,0,0,.55)"></div>
  <div style="left:721px;top:194px;width:292px;height:19px;background:linear-gradient(#d4d4d4,#bcbcbc 40%,#a8a8a8)"></div>
  <div style="left:724px;top:196px;width:12px;height:2px;background:#bbb"></div>
  <div style="left:862px;top:196px;width:10px;height:2px;background:#999"></div>
  <div style="left:727px;top:202px;width:8px;height:8px;border-radius:50%;background:radial-gradient(#f4f4f4,#b0b0b0);border:1px solid #888"></div>
  <div style="left:736px;top:201px;width:9px;height:9px;border-radius:50%;background:radial-gradient(#f4f4f4,#b0b0b0);border:1px solid #888"></div>
  <div style="left:746px;top:202px;width:8px;height:8px;border-radius:50%;background:radial-gradient(#f4f4f4,#b0b0b0);border:1px solid #888"></div>
  <div style="left:760px;top:205px;width:24px;height:1px;background:#555"></div>
  <div style="left:779px;top:204px;width:3px;height:3px;border-radius:50%;background:#eee"></div>
  <div style="left:803px;top:200px;width:128px;height:11px;background:linear-gradient(#e4e8cc,#dcdfc0);border:1px solid #8a8a7a"></div>
  <div style="left:865px;top:202px;width:5px;height:6px;border-radius:45%;background:#444"></div>
  <div style="left:945px;top:202px;width:13px;height:5px;background:linear-gradient(#eee,#c0c0c0);border:1px solid #777"></div>
  <div style="left:958px;top:202px;width:7px;height:5px;background:linear-gradient(#eee,#c0c0c0);border:1px solid #777"></div>
  <div style="left:968px;top:202px;width:40px;height:5px;background:#fff;border-radius:3px;border:1px solid #888"></div>
  <div style="left:951px;top:209px;width:5px;height:1px;background:#444"></div>
  <div style="left:984px;top:209px;width:6px;height:1px;background:#444"></div>
  <div style="left:721px;top:212px;width:292px;height:1px;background:#777"></div>
  <!-- sidebar -->
  <div style="left:721px;top:213px;width:61px;height:149px;background:linear-gradient(#dfe4ec,#d2d8e2)"></div>
  <div class="t" style="left:722px;top:213px;width:16px;height:4px;font-size:3.3px;line-height:4px;color:#8a8a8a;font-weight:bold;">LIBRARY</div>
  <div style="left:728px;top:219px;width:3px;height:3px;background:#5a80c8"></div>
  <div class="t" style="left:733px;top:218px;width:16px;height:4px;font-size:3.3px;line-height:4px;color:#333;">Music</div>
  <div style="left:728px;top:224px;width:3px;height:3px;background:#3a5aa0"></div>
  <div class="t" style="left:733px;top:223px;width:16px;height:4px;font-size:3.3px;line-height:4px;color:#333;">Movies</div>
  <div style="left:728px;top:229px;width:3px;height:3px;background:#4a78c0"></div>
  <div class="t" style="left:733px;top:228px;width:18px;height:4px;font-size:3.3px;line-height:4px;color:#333;">TV Shows</div>
  <div style="left:728px;top:234px;width:3px;height:3px;background:#8a3ab0"></div>
  <div class="t" style="left:733px;top:233px;width:17px;height:4px;font-size:3.3px;line-height:4px;color:#333;">Podcasts</div>
  <div style="left:776px;top:234px;width:5px;height:3px;border-radius:2px;background:#a8b0c0"></div>
  <div class="t" style="left:722px;top:239px;width:14px;height:4px;font-size:3.3px;line-height:4px;color:#8a8a8a;font-weight:bold;">STORE</div>
  <div style="left:728px;top:245px;width:3px;height:3px;background:#48a848"></div>
  <div class="t" style="left:733px;top:244px;width:20px;height:4px;font-size:3.3px;line-height:4px;color:#333;">iTunes Store</div>
  <div style="left:728px;top:250px;width:3px;height:3px;background:#48a848"></div>
  <div class="t" style="left:733px;top:249px;width:19px;height:4px;font-size:3.3px;line-height:4px;color:#333;">Purchased</div>
  <div style="left:721px;top:255px;width:61px;height:5px;background:linear-gradient(#98a8bc,#7c8ca4)"></div>
  <div style="left:728px;top:256px;width:3px;height:3px;background:#48a848"></div>
  <div class="t" style="left:733px;top:255px;width:20px;height:4px;font-size:3.3px;line-height:4px;color:#f0f0f0;">Downloads</div>
  <div style="left:773px;top:256px;width:7px;height:3px;background:#e8e8e8;border-radius:2px"></div>
  <div class="t" style="left:722px;top:261px;width:18px;height:4px;font-size:3.3px;line-height:4px;color:#8a8a8a;font-weight:bold;">DEVICES</div>
  <div style="left:726px;top:268px;width:4px;height:2px;background:#ccc"></div>
  <div class="t" style="left:731px;top:266px;width:22px;height:4px;font-size:3.3px;line-height:4px;color:#333;">Mike&#39;s Apple TV</div>
  <div style="left:732px;top:272px;width:3px;height:3px;background:#5a80c8"></div>
  <div class="t" style="left:737px;top:271px;width:16px;height:4px;font-size:3.3px;line-height:4px;color:#333;">Music</div>
  <div style="left:732px;top:277px;width:3px;height:3px;background:#3a5aa0"></div>
  <div class="t" style="left:737px;top:276px;width:16px;height:4px;font-size:3.3px;line-height:4px;color:#333;">Movies</div>
  <div style="left:732px;top:282px;width:3px;height:3px;background:#4a78c0"></div>
  <div class="t" style="left:737px;top:281px;width:17px;height:4px;font-size:3.3px;line-height:4px;color:#333;">TV Shows</div>
  <div style="left:732px;top:287px;width:3px;height:3px;background:#8a3ab0"></div>
  <div class="t" style="left:737px;top:286px;width:17px;height:4px;font-size:3.3px;line-height:4px;color:#333;">Podcasts</div>
  <div style="left:776px;top:287px;width:4px;height:3px;border-radius:2px;background:#a8b0c0"></div>
  <div style="left:732px;top:292px;width:3px;height:3px;background:#5a70a0"></div>
  <div class="t" style="left:737px;top:291px;width:24px;height:4px;font-size:3.3px;line-height:4px;color:#333;">Purchased on Apple TV</div>
  <div style="left:732px;top:297px;width:3px;height:3px;background:#5a70a0"></div>
  <div class="t" style="left:737px;top:296px;width:21px;height:4px;font-size:3.3px;line-height:4px;color:#333;">Purchased on iPhone</div>
  <div style="left:732px;top:302px;width:3px;height:3px;background:#5a70a0"></div>
  <div class="t" style="left:737px;top:301px;width:16px;height:4px;font-size:3.3px;line-height:4px;color:#333;">Purchased</div>
  <div class="t" style="left:722px;top:307px;width:16px;height:4px;font-size:3.3px;line-height:4px;color:#8a8a8a;font-weight:bold;">SHARED</div>
  <div style="left:728px;top:313px;width:4px;height:3px;background:#3a68b0"></div>
  <div class="t" style="left:734px;top:312px;width:18px;height:4px;font-size:3.3px;line-height:4px;color:#333;">Mike&#39;s Music</div>
  <div style="left:728px;top:318px;width:4px;height:3px;background:#3a68b0"></div>
  <div class="t" style="left:734px;top:317px;width:20px;height:4px;font-size:3.3px;line-height:4px;color:#333;">Mike&#39;s Music Library</div>
  <div class="t" style="left:722px;top:324px;width:18px;height:4px;font-size:3.3px;line-height:4px;color:#8a8a8a;font-weight:bold;">PLAYLISTS</div>
  <!-- main list -->
  <div style="left:782px;top:213px;width:228px;height:137px;background:repeating-linear-gradient(#edf2fa 0,#edf2fa 8px,#ffffff 8px,#ffffff 16px);background-position:0 5px"></div>
  <div style="left:782px;top:213px;width:228px;height:5px;background:linear-gradient(#f0f0f0,#d8d8d8);border-bottom:1px solid #bbb"></div>
  <div style="left:784px;top:214px;width:6px;height:1px;background:#999"></div>
  <div style="left:792px;top:214px;width:6px;height:1px;background:#999"></div>
  <div style="left:936px;top:214px;width:6px;height:1px;background:#999"></div>
  <div style="left:782px;top:218px;width:1px;height:132px;background:#bbb"></div>
  <div style="left:787px;top:220px;width:3px;height:4px;border-radius:50% 50% 30% 30%;background:#9a40c0"></div>
  <div class="t" style="left:793px;top:219px;width:76px;height:5px;font-size:4.2px;line-height:5px;color:#333">NASA Moons Podcast 4: Saturn Moon Titan</div>
  <div style="left:936px;top:221px;width:16px;height:1px;background:#999"></div>
  <div style="left:787px;top:228px;width:3px;height:4px;border-radius:50% 50% 30% 30%;background:#9a40c0"></div>
  <div class="t" style="left:793px;top:227px;width:86px;height:5px;font-size:4.2px;line-height:5px;color:#333">ID 1 CNN Student News Currently - CNN Student</div>
  <div style="left:936px;top:229px;width:14px;height:1px;background:#999"></div>
  <div style="left:787px;top:236px;width:3px;height:4px;border-radius:50% 50% 30% 30%;background:#9a40c0"></div>
  <div class="t" style="left:793px;top:235px;width:118px;height:5px;font-size:4.2px;line-height:5px;color:#111;font-weight:bold">MacBreak Weekly, Video Casts: Totally Real MacBreak HD</div>
  <div style="left:936px;top:236px;width:46px;height:1px;background:#ccc"></div>
  <div style="left:936px;top:238px;width:48px;height:1px;background:#888"></div>
  <div style="left:1007px;top:237px;width:2px;height:2px;background:#888;border-radius:50%"></div>
  <div style="left:787px;top:244px;width:3px;height:4px;border-radius:50% 50% 30% 30%;background:#9a40c0"></div>
  <div class="t" style="left:797px;top:243px;width:106px;height:5px;font-size:4.2px;line-height:5px;color:#333">Health: Ruby Swings, Cause Canceled, and other tech updates</div>
  <div style="left:936px;top:245px;width:14px;height:1px;background:#999"></div>
  <div style="left:787px;top:252px;width:3px;height:4px;border-radius:50% 50% 30% 30%;background:#9a40c0"></div>
  <div class="t" style="left:793px;top:251px;width:78px;height:5px;font-size:4.2px;line-height:5px;color:#111;font-weight:bold">Daniel Beans Shows: O&#39;Reilly Daily Video</div>
  <div style="left:936px;top:252px;width:46px;height:1px;background:#ccc"></div>
  <div style="left:936px;top:254px;width:44px;height:1px;background:#888"></div>
  <div style="left:1007px;top:253px;width:2px;height:2px;background:#888;border-radius:50%"></div>
  <div style="left:1009px;top:213px;width:4px;height:137px;background:linear-gradient(90deg,#e4e4e4,#fafafa)"></div>
  <!-- bottom dark bar -->
  <div style="left:782px;top:350px;width:231px;height:12px;background:linear-gradient(#8c9098,#6a6e78)"></div>
  <div style="left:790px;top:355px;width:30px;height:1px;background:#bbb"></div>
  <div style="left:967px;top:354px;width:20px;height:5px;background:linear-gradient(#f4f4f4,#d0d0d0);border-radius:1px"></div>
  <div style="left:990px;top:354px;width:19px;height:5px;background:linear-gradient(#f4f4f4,#d0d0d0);border-radius:1px"></div>
  <!-- bottom bar -->
  <div style="left:721px;top:362px;width:292px;height:7px;background:linear-gradient(#dedede,#b4b4b4)"></div>
  <div style="left:724px;top:363px;width:20px;height:4px;background:#eee"></div>
  <div style="left:745px;top:363px;width:1px;height:4px;background:#333"></div>
  <div style="left:747px;top:363px;width:8px;height:4px;background:#eee"></div>
  <div style="left:756px;top:363px;width:1px;height:4px;background:#333"></div>
  <div style="left:758px;top:363px;width:8px;height:4px;background:#eee"></div>
  <div style="left:1003px;top:363px;width:7px;height:4px;background:#eee"></div>
</div></div>

<div class="th" style="left:25px;top:413px;width:321px;height:200px;background:linear-gradient(115deg,#acb8cf 0%,#8c9cc2 30%,#6e84b2 65%,#50689c 100%)">
<div class="in" style="left:-25px;top:-413px">
  <div style="left:25px;top:413px;width:321px;height:1px;background:#c0c8d8"></div>
  <div style="left:25px;top:413px;width:2px;height:200px;background:rgba(60,70,100,.35)"></div>
  <!-- log window -->
  <div style="left:255px;top:439px;width:52px;height:133px;background:#fff;border:1px solid #8a8a8a;box-shadow:2px 3px 6px rgba(0,0,0,.5)"></div>
  <div style="left:256px;top:440px;width:50px;height:4px;background:#e4e4e4;border-bottom:1px solid #aaa"></div>
  <div style="left:261px;top:441px;width:9px;height:1px;background:#333"></div>
    <div style="left:261px;top:446.8px;width:6px;height:2px;background:#5a5ae8;opacity:.85"></div>
  <div style="left:268px;top:446.8px;width:5px;height:2px;background:#5a5ae8;opacity:.85"></div>
  <div style="left:261px;top:450.7px;width:7px;height:2px;background:#5a5ae8;opacity:.85"></div>
  <div style="left:269px;top:450.7px;width:3px;height:2px;background:#5a5ae8;opacity:.85"></div>
  <div style="left:261px;top:454.7px;width:7px;height:2px;background:#5a5ae8;opacity:.85"></div>
  <div style="left:269px;top:454.7px;width:2px;height:2px;background:#5a5ae8;opacity:.85"></div>
  <div style="left:261px;top:458.6px;width:6px;height:2px;background:#5a5ae8;opacity:.85"></div>
  <div style="left:261px;top:462.5px;width:5px;height:2px;background:#5a5ae8;opacity:.85"></div>
  <div style="left:267px;top:462.5px;width:1px;height:2px;background:#5a5ae8;opacity:.85"></div>
  <div style="left:261px;top:466.4px;width:9px;height:2px;background:#5a5ae8;opacity:.85"></div>
  <div style="left:261px;top:470.4px;width:4px;height:2px;background:#5a5ae8;opacity:.85"></div>
  <div style="left:266px;top:470.4px;width:8px;height:2px;background:#5a5ae8;opacity:.85"></div>
  <div style="left:275px;top:470.4px;width:6px;height:2px;background:#5a5ae8;opacity:.85"></div>
  <div style="left:282px;top:470.4px;width:8px;height:2px;background:#5a5ae8;opacity:.85"></div>
  <div style="left:261px;top:474.3px;width:11px;height:2px;background:#5a5ae8;opacity:.85"></div>
  <div style="left:273px;top:474.3px;width:8px;height:2px;background:#5a5ae8;opacity:.85"></div>
  <div style="left:282px;top:474.3px;width:1px;height:2px;background:#5a5ae8;opacity:.85"></div>
  <div style="left:261px;top:478.2px;width:2px;height:2px;background:#5a5ae8;opacity:.85"></div>
  <div style="left:261px;top:482.2px;width:11px;height:2px;background:#5a5ae8;opacity:.85"></div>
  <div style="left:273px;top:482.2px;width:5px;height:2px;background:#5a5ae8;opacity:.85"></div>
  <div style="left:279px;top:482.2px;width:8px;height:2px;background:#5a5ae8;opacity:.85"></div>
  <div style="left:261px;top:486.1px;width:9px;height:2px;background:#5a5ae8;opacity:.85"></div>
  <div style="left:271px;top:486.1px;width:4px;height:2px;background:#5a5ae8;opacity:.85"></div>
  <div style="left:276px;top:486.1px;width:3px;height:2px;background:#5a5ae8;opacity:.85"></div>
  <div style="left:261px;top:490.0px;width:7px;height:2px;background:#5a5ae8;opacity:.85"></div>
  <div style="left:269px;top:490.0px;width:5px;height:2px;background:#5a5ae8;opacity:.85"></div>
  <div style="left:275px;top:490.0px;width:4px;height:2px;background:#5a5ae8;opacity:.85"></div>
  <div style="left:261px;top:494.0px;width:7px;height:2px;background:#1a1ab0;opacity:1"></div>
  <div style="left:269px;top:494.0px;width:2px;height:2px;background:#1a1ab0;opacity:1"></div>
  <div style="left:261px;top:497.9px;width:8px;height:2px;background:#5a5ae8;opacity:.85"></div>
  <div style="left:261px;top:501.8px;width:3px;height:2px;background:#5a5ae8;opacity:.85"></div>
  <div style="left:261px;top:505.8px;width:11px;height:2px;background:#5a5ae8;opacity:.85"></div>
  <div style="left:273px;top:505.8px;width:2px;height:2px;background:#5a5ae8;opacity:.85"></div>
  <div style="left:261px;top:509.7px;width:4px;height:2px;background:#5a5ae8;opacity:.85"></div>
  <div style="left:266px;top:509.7px;width:8px;height:2px;background:#5a5ae8;opacity:.85"></div>
  <div style="left:256px;top:564px;width:50px;height:7px;background:#e8e8e8;border-top:1px solid #bbb"></div>
  <div style="left:277px;top:566px;width:4px;height:3px;background:#555;border-radius:50%"></div>
  <div style="left:303px;top:444px;width:2px;height:120px;background:#eee"></div>
  <!-- handbrake window -->
  <div style="left:111px;top:433px;width:149px;height:143px;background:#e6e6e6;border:1px solid #9a9a9a;box-shadow:1px 4px 8px rgba(0,0,0,.5)"></div>
  <div style="left:112px;top:434px;width:147px;height:18px;background:linear-gradient(#f0f0f0,#e2e2e2 50%,#d6d6d6)"></div>
  <div style="left:114px;top:435px;width:9px;height:2px;background:#c8c8c8"></div>
  <div style="left:176px;top:436px;width:17px;height:1px;background:#777"></div>
  <div style="left:252px;top:435px;width:5px;height:2px;background:#ccc"></div>
  <div style="left:114px;top:440px;width:8px;height:6px;background:#1a3a6a"></div>
  <div style="left:114px;top:439px;width:8px;height:2px;background:#333;transform:rotate(-10deg)"></div>
  <div style="left:129px;top:440px;width:7px;height:7px;border-radius:50%;background:#a8d890"></div>
  <div style="left:139px;top:440px;width:7px;height:7px;border-radius:50%;background:#a8d890"></div>
  <div style="left:156px;top:441px;width:6px;height:5px;background:#6a88b0"></div>
  <div style="left:176px;top:440px;width:6px;height:3px;background:#e0b030"></div>
  <div style="left:176px;top:443px;width:6px;height:4px;background:#2a6ab8"></div>
  <div style="left:221px;top:441px;width:8px;height:5px;background:#2a2a2a"></div>
  <div style="left:245px;top:440px;width:5px;height:6px;background:#f8f8f8;border:1px solid #ccc"></div>
  <div class="t" style="left:113px;top:447px;width:11px;height:4px;font-size:3.3px;line-height:4px;color:#555">Picture</div>
  <div class="t" style="left:128px;top:447px;width:9px;height:4px;font-size:3.3px;line-height:4px;color:#777">Settings</div>
  <div class="t" style="left:138px;top:447px;width:10px;height:4px;font-size:3.3px;line-height:4px;color:#777">Picture</div>
  <div class="t" style="left:149px;top:447px;width:21px;height:4px;font-size:3.3px;line-height:4px;color:#777">Deinterlace</div>
  <div class="t" style="left:170px;top:447px;width:19px;height:4px;font-size:3.3px;line-height:4px;color:#444">Video Codec</div>
  <div class="t" style="left:214px;top:447px;width:22px;height:4px;font-size:3.3px;line-height:4px;color:#555">Deinterlace</div>
  <div class="t" style="left:236px;top:447px;width:24px;height:4px;font-size:3.3px;line-height:4px;color:#777">Size Codec File</div>
  <div class="t" style="left:112px;top:449px;width:149px;height:4px;font-size:3.3px;line-height:4px;color:#777">Picture source Settings Destination Anamorphic Chapters bitrate Picture Format Source</div>
  <!-- body -->
  <div class="t" style="left:117px;top:455px;width:12px;height:4px;font-size:3.3px;line-height:4px;color:#333">Denoise</div>
  <div style="left:176px;top:457px;width:79px;height:1px;background:#888"></div>
  <div class="t" style="left:120px;top:461px;width:7px;height:4px;font-size:3.3px;line-height:4px;color:#777">Duration</div>
  <div style="left:131px;top:461px;width:39px;height:4px;background:#ececec;border:1px solid #c4c4c4"></div>
  <div class="t" style="left:173px;top:461px;width:14px;height:4px;font-size:3.3px;line-height:4px;color:#777">through</div>
  <div style="left:189px;top:461px;width:12px;height:4px;background:#ececec;border:1px solid #c4c4c4"></div>
  <div style="left:211px;top:461px;width:13px;height:4px;background:#ececec;border:1px solid #c4c4c4"></div>
  <div class="t" style="left:227px;top:461px;width:16px;height:4px;font-size:3.3px;line-height:4px;color:#777">Chapters</div>
  <div class="t" style="left:117px;top:469px;width:16px;height:4px;font-size:3.3px;line-height:4px;color:#333">Video Advanced</div>
  <div class="t" style="left:240px;top:468px;width:16px;height:4px;font-size:3.3px;line-height:4px;color:#777">Title Settings</div>
  <div class="t" style="left:122px;top:476px;width:8px;height:4px;font-size:3.3px;line-height:4px;color:#777">Encoder</div>
  <div style="left:131px;top:476px;width:94px;height:4px;background:#fff"></div>
  <div class="t" style="left:133px;top:475px;width:42px;height:4px;font-size:3.3px;line-height:4px;color:#777">Picture Video Denoise Subtitles</div>
  <div style="left:234px;top:476px;width:20px;height:5px;background:#f0f0f0;border:1px solid #bbb;border-radius:2px"></div>
  <div class="t" style="left:117px;top:483px;width:26px;height:4px;font-size:3.3px;line-height:4px;color:#222">as Cropping Source</div>
  <div style="left:181px;top:484px;width:73px;height:1px;background:#888"></div>
  <div class="t" style="left:120px;top:489px;width:10px;height:4px;font-size:3.3px;line-height:4px;color:#777">Destination</div>
  <div style="left:131px;top:489px;width:50px;height:4px;background:#ececec;border:1px solid #c4c4c4"></div>
  <div class="t" style="left:189px;top:489px;width:10px;height:4px;font-size:3.3px;line-height:4px;color:#777">Settings</div>
  <div style="left:201px;top:489px;width:54px;height:4px;background:#ececec;border:1px solid #c4c4c4"></div>
  <!-- tab box -->
  <div style="left:116px;top:499px;width:139px;height:71px;background:#dcdcdc;border:1px solid #c4c4c4"></div>
  <div style="left:150px;top:497px;width:66px;height:4px;background:#f4f4f4;border:1px solid #aaa"></div>
  <div style="left:160px;top:497px;width:22px;height:4px;background:linear-gradient(#f8f8f8,#e0e8f4);border:1px solid #888"></div>
  <div class="t" style="left:164px;top:496px;width:16px;height:4px;font-size:3.3px;line-height:4px;color:#222">Same Constant</div>
  <div class="t" style="left:186px;top:496px;width:9px;height:4px;font-size:3.3px;line-height:4px;color:#333">Destination</div>
  <div class="t" style="left:197px;top:496px;width:14px;height:4px;font-size:3.3px;line-height:4px;color:#333">Framerate</div>
  <div class="t" style="left:122px;top:507px;width:18px;height:4px;font-size:3.3px;line-height:4px;color:#777">Encoder Subtitles</div>
  <div style="left:146px;top:507px;width:39px;height:4px;background:#ececec;border:1px solid #c4c4c4"></div>
  <div class="t" style="left:128px;top:513px;width:12px;height:4px;font-size:3.3px;line-height:4px;color:#777">Deinterlace</div>
  <div style="left:146px;top:513px;width:39px;height:4px;background:#ececec;border:1px solid #c4c4c4"></div>
  <div style="left:122px;top:520px;width:3px;height:3px;border:1px solid #aaa;background:#f4f4f4"></div>
  <div class="t" style="left:127px;top:519px;width:28px;height:4px;font-size:3.3px;line-height:4px;color:#777">as Title Duration</div>
  <div style="left:122px;top:525px;width:3px;height:3px;border:1px solid #aaa;background:#f4f4f4"></div>
  <div class="t" style="left:127px;top:524px;width:24px;height:4px;font-size:3.3px;line-height:4px;color:#777">File bitrate</div>
  <div style="left:127px;top:530px;width:3px;height:3px;border:1px solid #aaa;background:#f4f4f4"></div>
  <div class="t" style="left:133px;top:529px;width:21px;height:4px;font-size:3.3px;line-height:4px;color:#777">File as Average</div>
  <div class="t" style="left:194px;top:506px;width:9px;height:4px;font-size:3.3px;line-height:4px;color:#777">Duration</div>
  <div style="left:194px;top:513px;width:3px;height:3px;border:1px solid #999;border-radius:50%"></div>
  <div class="t" style="left:199px;top:512px;width:26px;height:4px;font-size:3.3px;line-height:4px;color:#777">Title Source Audio</div>
  <div style="left:230px;top:512px;width:18px;height:4px;background:#fff"></div>
  <div style="left:194px;top:519px;width:3px;height:3px;border:1px solid #999;border-radius:50%"></div>
  <div class="t" style="left:199px;top:518px;width:30px;height:4px;font-size:3.3px;line-height:4px;color:#777">Audio through Size</div>
  <div style="left:230px;top:518px;width:18px;height:4px;background:#fff"></div>
  <div style="left:194px;top:524px;width:3px;height:3px;border:1px solid #999;border-radius:50%"></div>
  <div class="t" style="left:199px;top:523px;width:28px;height:4px;font-size:3.3px;line-height:4px;color:#777">Average bitrate</div>
  <div style="left:194px;top:531px;width:60px;height:1px;background:#999"></div>
  <div style="left:223px;top:529px;width:2px;height:3px;background:#777"></div>
  <div class="t" style="left:121px;top:540px;width:15px;height:4px;font-size:3.3px;line-height:4px;color:#777">Constant</div>
  <div style="left:136px;top:542px;width:118px;height:1px;background:#c0c0c0"></div>
  <div class="t" style="left:136px;top:545px;width:11px;height:4px;font-size:3.3px;line-height:4px;color:#777">Duration</div>
  <div class="t" style="left:153px;top:545px;width:11px;height:4px;font-size:3.3px;line-height:4px;color:#777">Video</div>
  <div class="t" style="left:185px;top:545px;width:9px;height:4px;font-size:3.3px;line-height:4px;color:#777">Same</div>
  <div class="t" style="left:131px;top:549px;width:16px;height:4px;font-size:3.3px;line-height:4px;color:#777">Quality</div>
  <div class="t" style="left:153px;top:549px;width:10px;height:4px;font-size:3.3px;line-height:4px;color:#777">Destination</div>
  <div class="t" style="left:183px;top:549px;width:12px;height:4px;font-size:3.3px;line-height:4px;color:#777">source</div>
  <div class="t" style="left:127px;top:553px;width:18px;height:4px;font-size:3.3px;line-height:4px;color:#777">Quality Source</div>
  <div class="t" style="left:180px;top:553px;width:15px;height:4px;font-size:3.3px;line-height:4px;color:#777">Constant</div>
  <div class="t" style="left:122px;top:557px;width:24px;height:4px;font-size:3.3px;line-height:4px;color:#777">Browse Output</div>
  <div class="t" style="left:178px;top:557px;width:19px;height:4px;font-size:3.3px;line-height:4px;color:#777">Advanced File</div>
  <div style="left:221px;top:546px;width:28px;height:5px;background:#f2f2f2;border:1px solid #bbb;border-radius:3px"></div>
</div></div>

<div class="th" style="left:370px;top:413px;width:321px;height:200px;background:linear-gradient(115deg,#acb8cf 0%,#8c9cc2 30%,#6e84b2 65%,#50689c 100%)">
<div class="in" style="left:-370px;top:-413px">
  <div style="left:370px;top:413px;width:321px;height:1px;background:#c0c8d8"></div>
  <div style="left:370px;top:413px;width:2px;height:200px;background:rgba(60,70,100,.4)"></div>
  <!-- window -->
  <div style="left:376px;top:419px;width:258px;height:176px;background:#dcdcdc;border:1px solid #777;box-shadow:1px 4px 8px rgba(0,0,0,.55)"></div>
  <div style="left:377px;top:420px;width:256px;height:18px;background:linear-gradient(#f0f0f0,#e0e0e0 50%,#cecece)"></div>
  <div style="left:379px;top:421px;width:10px;height:2px;background:#c8c8c8"></div>
  <div style="left:499px;top:421px;width:12px;height:1px;background:#888"></div>
  <div style="left:380px;top:426px;width:6px;height:6px;background:#8ac870;border-radius:2px"></div>
  <div style="left:390px;top:426px;width:6px;height:6px;background:linear-gradient(#e8e8e8,#9a9a9a)"></div>
  <div style="left:400px;top:427px;width:5px;height:5px;background:#2a68c8"></div>
  <div style="left:416px;top:425px;width:7px;height:7px;background:linear-gradient(#f0d080,#b87828)"></div>
  <div style="left:452px;top:426px;width:5px;height:4px;border-radius:50%;background:#e04080"></div>
  <div style="left:456px;top:429px;width:4px;height:1px;background:#444;transform:rotate(45deg)"></div>
  <div style="left:467px;top:426px;width:5px;height:4px;border-radius:50%;background:#4a80d0"></div>
  <div style="left:482px;top:426px;width:7px;height:6px;background:#e8c098;border:1px solid #d89060"></div>
  <div style="left:511px;top:426px;width:7px;height:6px;background:#d890c8"></div>
  <div style="left:521px;top:426px;width:7px;height:6px;background:#90a0e0"></div>
  <div style="left:547px;top:427px;width:5px;height:6px;background:#fafafa;border:1px solid #bbb"></div>
  <div style="left:577px;top:426px;width:3px;height:6px;background:#e890b8"></div>
  <div style="left:588px;top:426px;width:4px;height:6px;background:#90b0e0"></div>
  <div style="left:614px;top:426px;width:7px;height:7px;border-radius:50%;background:conic-gradient(#e03030,#e0e030,#30c030,#3080e0,#c030c0,#e03030)"></div>
  <div style="left:624px;top:426px;width:6px;height:6px;background:linear-gradient(90deg,#3070d0,#e04040)"></div>
  <div style="left:379px;top:435px;width:8px;height:1px;background:#888"></div>
  <div style="left:389px;top:435px;width:8px;height:1px;background:#888"></div>
  <div style="left:398px;top:435px;width:8px;height:1px;background:#888"></div>
  <div style="left:411px;top:435px;width:18px;height:1px;background:#888"></div>
  <div style="left:447px;top:435px;width:14px;height:1px;background:#777"></div>
  <div style="left:463px;top:435px;width:13px;height:1px;background:#777"></div>
  <div style="left:478px;top:435px;width:16px;height:1px;background:#777"></div>
  <div style="left:542px;top:435px;width:8px;height:1px;background:#888"></div>
  <div style="left:573px;top:435px;width:12px;height:1px;background:#bbb"></div>
  <div style="left:609px;top:435px;width:10px;height:1px;background:#777"></div>
  <div style="left:622px;top:435px;width:9px;height:1px;background:#777"></div>
  <div style="left:377px;top:438px;width:256px;height:1px;background:#999"></div>
  <!-- left pages -->
  <div style="left:377px;top:439px;width:18px;height:150px;background:#fff"></div>
  <div style="left:377px;top:439px;width:18px;height:17px;background:#6a707c"></div>
  <div style="left:380px;top:440px;width:11px;height:12px;background:#fff"></div>
  <div style="left:381px;top:453px;width:8px;height:1px;background:#eee"></div>
  <div style="left:395px;top:439px;width:3px;height:150px;background:#e8e8e8"></div>
  <div style="left:377px;top:589px;width:21px;height:5px;background:#e4e4e4;border-top:1px solid #c8c8c8"></div>
  <div style="left:391px;top:591px;width:5px;height:1px;background:#555"></div>
  <!-- canvas -->
  <div style="left:398px;top:439px;width:148px;height:126px;background:#8e8e8e"></div>
  <div style="left:423px;top:439px;width:97px;height:125px;background:#fff"></div>
  <!-- balloons panel -->
  <div style="left:398px;top:565px;width:148px;height:29px;background:#d4d4d4"></div>
  <div style="left:400px;top:567px;width:146px;height:27px;background:linear-gradient(#e0e0e0,#cccccc);border:1px solid #bbb;border-radius:2px"></div>
  <div style="left:401px;top:567px;width:34px;height:3px;background:#8a8a8a"></div>
  <div style="left:410px;top:574px;width:18px;height:4px;background:#fff;border:1px solid #999"></div>
  <div style="left:405px;top:580px;width:29px;height:9px;background:#6a6a6a;border-radius:3px;transform:skewX(-12deg) rotate(-4deg)"></div>
  <div class="t" style="left:406px;top:580.5px;width:28px;height:8px;font-size:6px;line-height:8px;color:#fff;font-weight:bold;font-style:italic;transform:rotate(-4deg)">LETTERS</div>
  <div style="left:439px;top:569px;width:12px;height:7px;border-radius:50%;background:#fafafa;border:1px solid #777"></div>
  <div style="left:454px;top:569px;width:12px;height:7px;border-radius:50%;background:#fafafa;border:1px solid #777"></div>
  <div style="left:469px;top:569px;width:11px;height:7px;border-radius:50%;background:#fafafa;border:1px solid #777"></div>
  <div style="left:484px;top:569px;width:11px;height:7px;border-radius:50%;background:#fafafa;border:1px solid #777"></div>
  <div style="left:499px;top:569px;width:11px;height:7px;border-radius:40%;background:#fafafa;border:1px solid #777"></div>
  <div style="left:514px;top:569px;width:11px;height:8px;background:#fafafa;border:1px solid #777"></div>
  <div style="left:439px;top:581px;width:12px;height:7px;border-radius:50%;background:#fafafa;border:1px solid #777"></div>
  <div style="left:454px;top:580px;width:12px;height:8px;border-radius:50%;background:#fafafa;border:1px solid #777"></div>
  <div style="left:469px;top:581px;width:11px;height:7px;border-radius:30%;background:#fafafa;border:1px solid #777"></div>
  <div style="left:484px;top:581px;width:11px;height:7px;border-radius:50%;background:#fafafa;border:1px solid #777"></div>
  <div style="left:499px;top:581px;width:11px;height:7px;border-radius:50%;background:#fafafa;border:1px solid #777"></div>
  <div style="left:514px;top:581px;width:11px;height:8px;background:#fafafa;border:1px solid #777"></div>
  <div style="left:531px;top:573px;width:14px;height:9px;border-radius:50%;background:#fafafa;border:1px solid #888"></div>
  <div style="left:533px;top:585px;width:10px;height:1px;background:#999"></div>
  <!-- right panel -->
  <div style="left:546px;top:439px;width:87px;height:155px;background:#d8d8d8"></div>
  <div style="left:548px;top:443px;width:83px;height:150px;background:#e6e6e6;border:1px solid #c0c0c0;border-radius:3px"></div>
  <div style="left:572px;top:440px;width:36px;height:6px;background:linear-gradient(#c8c8c8,#9a9a9a);border:1px solid #888;border-radius:3px"></div>
  <div style="left:590px;top:440px;width:18px;height:6px;background:linear-gradient(#f0f0f0,#d0d0d0);border:1px solid #999;border-radius:0 3px 3px 0"></div>
  <div style="left:551px;top:449px;width:23px;height:20px;background:#cdcdcd;border:1px solid #aaa"></div>
  <div style="left:551px;top:449px;width:23px;height:3px;background:#9a9a9a"></div>
  <div style="left:558px;top:456px;width:6px;height:10px;background:#fff;border:1px solid #555"></div>
  <div style="left:551px;top:473px;width:24px;height:56px;background:#fff;border:1px solid #ccc"></div>
  
  
  
  
  <div class="t" style="left:552px;top:475px;width:22px;height:50px;font-size:3.2px;line-height:3.4px;color:#333;white-space:normal">Select a layout and drag it onto the page, or double click it to add a new page.<br><br><span style="color:#4a4a90">You can also resize panels by dragging.</span><br><br>Design with templates to quickly make great comic pages.<br><br>Page Layouts</div>
  <div style="left:577px;top:450px;width:30px;height:1px;background:#555"></div>
  <div style="left:576px;top:454px;width:53px;height:4px;background:#f0f0f0;border:1px solid #aaa"></div>
  <div style="left:578px;top:455px;width:18px;height:1px;background:#6a80b0"></div>
  <div style="left:576px;top:460px;width:51px;height:68px;background:#fff"></div>
  <div style="left:626px;top:460px;width:3px;height:68px;background:#eee"></div>
  <div style="left:579px;top:461px;width:12px;height:12px;border:1px solid #aaa;background:linear-gradient(#fff 45%,#999 45%,#999 55%,#fff 55%)"></div>
  <div style="left:595px;top:461px;width:12px;height:12px;border:1px solid #888;background:linear-gradient(#fff 30%,#999 30%,#999 40%,#fff 40%,#fff 65%,#999 65%,#999 75%,#fff 75%)"></div>
  <div style="left:611px;top:461px;width:12px;height:12px;border:1px solid #aaa;background:linear-gradient(135deg,#fff 47%,#666 47%,#666 53%,#fff 53%)"></div>
  <div style="left:579px;top:477px;width:12px;height:12px;border:1px solid #aaa;background:linear-gradient(160deg,#fff 40%,#888 40%,#888 46%,#fff 46%,#fff 56%,#888 56%,#888 62%,#fff 62%)"></div>
  <div style="left:595px;top:477px;width:12px;height:12px;border:1px solid #aaa;background:#fff"></div>
  <div style="left:598px;top:480px;width:6px;height:6px;border:1px solid #777;transform:rotate(45deg)"></div>
  <div style="left:611px;top:477px;width:12px;height:12px;border:1px solid #aaa;background:#fff"></div>
  <div style="left:614px;top:480px;width:6px;height:6px;border:1px solid #666"></div>
  <div style="left:579px;top:493px;width:12px;height:12px;border:1px solid #777;background:linear-gradient(90deg,transparent 45%,#666 45%,#666 55%,transparent 55%),linear-gradient(#fff 45%,#666 45%,#666 55%,#fff 55%)"></div>
  <div style="left:595px;top:493px;width:12px;height:12px;border:1px solid #aaa;background:#fff"></div>
  <div style="left:611px;top:493px;width:12px;height:12px;border:1px solid #aaa;background:linear-gradient(#fff 30%,#aaa 30%,#aaa 38%,#fff 38%)"></div>
  <div style="left:579px;top:509px;width:12px;height:12px;border:1px solid #888;background:#fff"></div>
  <div style="left:595px;top:509px;width:12px;height:12px;border:1px solid #aaa;background:linear-gradient(90deg,#fff 45%,#aaa 45%,#aaa 55%,#fff 55%)"></div>
  <div style="left:611px;top:509px;width:12px;height:12px;border:1px solid #aaa;background:linear-gradient(#fff 40%,#aaa 40%,#aaa 48%,#fff 48%)"></div>
  <div style="left:580px;top:474px;width:10px;height:1px;background:#555"></div>
  <div style="left:597px;top:474px;width:8px;height:1px;background:#555"></div>
  <div style="left:612px;top:474px;width:9px;height:1px;background:#555"></div>
  <div style="left:580px;top:490px;width:9px;height:1px;background:#555"></div>
  <div style="left:597px;top:490px;width:9px;height:1px;background:#555"></div>
  <div style="left:612px;top:490px;width:9px;height:1px;background:#777"></div>
  <div style="left:580px;top:506px;width:10px;height:1px;background:#333"></div>
  <div style="left:596px;top:506px;width:10px;height:1px;background:#333"></div>
  <div style="left:612px;top:506px;width:10px;height:1px;background:#333"></div>
  <div style="left:580px;top:523px;width:9px;height:1px;background:#333"></div>
  <div style="left:596px;top:523px;width:10px;height:1px;background:#333"></div>
  <div style="left:612px;top:523px;width:9px;height:1px;background:#333"></div>
  <div style="left:548px;top:532px;width:83px;height:1px;background:#c0c0c0"></div>
  <div style="left:562px;top:539px;width:10px;height:1px;background:#555"></div>
  <div style="left:576px;top:537px;width:53px;height:5px;background:#f0f0f0;border:1px solid #aaa"></div>
  <div style="left:578px;top:538px;width:4px;height:2px;background:#e0a040"></div>
  <div style="left:583px;top:539px;width:10px;height:1px;background:#555"></div>
  <div style="left:550px;top:544px;width:78px;height:33px;background:#fff"></div>
  <div style="left:624px;top:544px;width:3px;height:33px;background:#eee"></div>
  <div style="left:552px;top:545px;width:22px;height:18px;background:linear-gradient(135deg,#e0a8a8,#c88888 50%,#d8a0a0)"></div>
  <div style="left:555px;top:552px;width:16px;height:6px;background:#b07070;opacity:.5"></div>
  <div style="left:578px;top:545px;width:20px;height:18px;background:#8a5020"></div>
  <div style="left:582px;top:546px;width:12px;height:16px;background:linear-gradient(#5a3828,#c8a888 50%,#e0c8a8)"></div>
  <div style="left:606px;top:545px;width:11px;height:18px;background:#1a1a1a"></div>
  <div style="left:607px;top:546px;width:8px;height:15px;background:linear-gradient(#a87868,#e8d0c8 60%,#c0a098)"></div>
  <div style="left:555px;top:565px;width:14px;height:1px;background:#999"></div>
  <div style="left:581px;top:565px;width:14px;height:1px;background:#999"></div>
  <div style="left:606px;top:565px;width:12px;height:1px;background:#555"></div>
  <div style="left:557px;top:568px;width:13px;height:9px;background:linear-gradient(90deg,#3a3050,#c89888)"></div>
  <div style="left:577px;top:570px;width:22px;height:7px;background:linear-gradient(90deg,#6a1818,#c86848)"></div>
  <div style="left:607px;top:568px;width:13px;height:9px;background:linear-gradient(#f0e0d0,#c86040)"></div>
  <div style="left:568px;top:580px;width:30px;height:1px;background:#999"></div>
  <div style="left:566px;top:579px;width:2px;height:2px;background:#444"></div>
  <div style="left:599px;top:579px;width:3px;height:2px;background:#444"></div>
  <div style="left:562px;top:584px;width:56px;height:6px;background:linear-gradient(#f4f4f4,#d4d4d4);border:1px solid #999;border-radius:3px"></div>
  <div style="left:562px;top:584px;width:18px;height:6px;background:linear-gradient(#c0c0c0,#a0a0a0);border:1px solid #888;border-radius:3px 0 0 3px"></div>
</div></div>

<div class="th" style="left:715px;top:413px;width:321px;height:200px;background:linear-gradient(115deg,#acb8cf 0%,#8c9cc2 30%,#6e84b2 65%,#50689c 100%)">
<div class="in" style="left:-715px;top:-413px">
  <div style="left:715px;top:413px;width:321px;height:1px;background:#c0c8d8"></div>
  <div style="left:715px;top:413px;width:2px;height:200px;background:rgba(60,70,100,.4)"></div>
  <!-- window -->
  <div style="left:717px;top:419px;width:302px;height:183px;background:#fff;border:1px solid #777;box-shadow:1px 4px 8px rgba(0,0,0,.55)"></div>
  <div style="left:718px;top:420px;width:300px;height:17px;background:linear-gradient(#f0f0f0,#e0e0e0 50%,#d0d0d0)"></div>
  <div style="left:720px;top:421px;width:10px;height:2px;background:#c8c8c8"></div>
  <div style="left:862px;top:421px;width:12px;height:1px;background:#888"></div>
  <div style="left:1011px;top:421px;width:5px;height:2px;background:#ccc"></div>
  <div style="left:721px;top:426px;width:6px;height:5px;background:#fafafa;border:1px solid #777"></div>
  <div style="left:731px;top:425px;width:6px;height:6px;background:#fafafa;border:1px solid #777"></div>
  <div style="left:789px;top:426px;width:5px;height:5px;background:#e8c040"></div>
  <div style="left:801px;top:426px;width:5px;height:5px;background:#f4f4f4;border:1px solid #666"></div>
  <div style="left:816px;top:425px;width:5px;height:5px;border-top:1px solid #888;border-left:1px solid #888;transform:rotate(-45deg)"></div>
  <div style="left:879px;top:426px;width:5px;height:5px;background:linear-gradient(90deg,#3a68b8 30%,transparent 30%,transparent 50%,#3a68b8 50%)"></div>
  <div style="left:892px;top:426px;width:5px;height:5px;border:1px solid #666;background:#f8f8f8"></div>
  <div style="left:903px;top:426px;width:6px;height:5px;background:#30a040"></div>
  <div style="left:916px;top:426px;width:5px;height:5px;background:#f0e090"></div>
  <div style="left:979px;top:426px;width:5px;height:5px;border-radius:40%;background:#3a6ad0"></div>
  <div style="left:990px;top:427px;width:6px;height:4px;background:#2a4a8a"></div>
  <div style="left:1001px;top:426px;width:5px;height:5px;border-radius:50%;background:conic-gradient(#e03030,#e0e030,#30c030,#3080e0,#e03030)"></div>
  <div style="left:1011px;top:426px;width:5px;height:5px;background:#888;opacity:.5"></div>
  <div style="left:721px;top:433px;width:7px;height:2px;background:#555;opacity:.55"></div>
  <div style="left:731px;top:433px;width:7px;height:2px;background:#555;opacity:.55"></div>
  <div style="left:787px;top:433px;width:10px;height:2px;background:#666;opacity:.55"></div>
  <div style="left:799px;top:433px;width:10px;height:2px;background:#666;opacity:.55"></div>
  <div style="left:811px;top:433px;width:13px;height:2px;background:#999;opacity:.55"></div>
  <div style="left:877px;top:433px;width:9px;height:2px;background:#666;opacity:.55"></div>
  <div style="left:888px;top:433px;width:11px;height:2px;background:#666;opacity:.55"></div>
  <div style="left:901px;top:433px;width:9px;height:2px;background:#555;opacity:.55"></div>
  <div style="left:912px;top:433px;width:11px;height:2px;background:#999;opacity:.55"></div>
  <div style="left:975px;top:433px;width:10px;height:2px;background:#888;opacity:.55"></div>
  <div style="left:987px;top:433px;width:8px;height:2px;background:#777;opacity:.55"></div>
  <div style="left:998px;top:433px;width:9px;height:2px;background:#777;opacity:.55"></div>
  <div style="left:1009px;top:433px;width:8px;height:2px;background:#888;opacity:.55"></div>
  <!-- format bar -->
  <div style="left:718px;top:436px;width:300px;height:7px;background:linear-gradient(#dcdcdc,#cfcfcf);border-top:1px solid #aaa;border-bottom:1px solid #999"></div>
  <div style="left:719px;top:438px;width:24px;height:3px;background:#e8e8e8;border:1px solid #aaa"></div>
  <div style="left:745px;top:438px;width:22px;height:3px;background:#e8e8e8;border:1px solid #aaa"></div>
  <div style="left:769px;top:438px;width:12px;height:3px;background:#e8e8e8;border:1px solid #aaa"></div>
  <div style="left:784px;top:438px;width:7px;height:3px;background:#111"></div>
  <div style="left:799px;top:438px;width:40px;height:3px;background:#e8e8e8;border:1px solid #999"></div>
  <div style="left:843px;top:438px;width:9px;height:3px;background:#e0e0e0"></div>
  <div style="left:862px;top:438px;width:25px;height:3px;background:#e8e8e8;border:1px solid #aaa"></div>
  <div style="left:888px;top:438px;width:12px;height:3px;background:#e8e8e8;border:1px solid #aaa"></div>
  <div style="left:903px;top:438px;width:22px;height:3px;background:#e8e8e8;border:1px solid #999"></div>
  <div style="left:934px;top:438px;width:8px;height:3px;background:#e8e8e8;border:1px solid #aaa"></div>
  <div style="left:961px;top:438px;width:11px;height:3px;background:#f4f4f4"></div>
  <div style="left:984px;top:438px;width:15px;height:3px;background:#aaa;border:1px solid #888"></div>
  <div style="left:1003px;top:438px;width:10px;height:2px;background:#888"></div>
  <div style="left:718px;top:443px;width:300px;height:4px;background:#fff;border-bottom:1px solid #aaa"></div>
  <div style="left:722px;top:444px;width:42px;height:1px;background:#ccc"></div>
  <div style="left:766px;top:444px;width:2px;height:2px;background:#888"></div>
  <div style="left:770px;top:444px;width:2px;height:2px;background:#e04040"></div>
  <div style="left:774px;top:444px;width:2px;height:2px;background:#40b040"></div>
  <!-- sidebar -->
  <div style="left:718px;top:447px;width:46px;height:154px;background:linear-gradient(#d8e0ea,#cad4e2)"></div>
  <div style="left:718px;top:447px;width:46px;height:7px;background:linear-gradient(#b0c0d8,#90a8c8)"></div>
  <div style="left:719px;top:449px;width:2px;height:2px;background:#333"></div>
  <div style="left:722px;top:447px;width:8px;height:7px;background:#f8f8f8"></div>
  <div style="left:732px;top:450px;width:10px;height:1px;background:#335"></div>
  <div style="left:718px;top:454px;width:46px;height:5px;background:linear-gradient(#7a98c8,#5a78a8)"></div>
  <div style="left:727px;top:455px;width:3px;height:3px;background:#e8c040"></div>
  <div style="left:732px;top:456px;width:10px;height:1px;background:#f0f0f0"></div>
  <div style="left:718px;top:523px;width:46px;height:4px;background:linear-gradient(#f8f8f8,#e4e4e4);border-top:1px solid #bbb"></div>
  <div style="left:735px;top:524px;width:10px;height:1px;background:#aaa"></div>
  <div style="left:718px;top:527px;width:46px;height:4px;background:#5a78a8"></div>
  <div style="left:723px;top:527px;width:5px;height:4px;background:#c0c8d0"></div>
  <div style="left:729px;top:528px;width:5px;height:1px;background:#fff"></div>
  <div style="left:723px;top:532px;width:5px;height:4px;background:#b0b0b0"></div>
  <div style="left:729px;top:533px;width:20px;height:1px;background:#555"></div>
  <div style="left:723px;top:536px;width:5px;height:4px;background:#e8e8e8"></div>
  <div style="left:729px;top:537px;width:6px;height:1px;background:#777"></div>
  <div style="left:723px;top:541px;width:5px;height:4px;background:#5a5a5a"></div>
  <div style="left:729px;top:542px;width:18px;height:1px;background:#444"></div>
  <div style="left:723px;top:545px;width:5px;height:4px;background:#707070"></div>
  <div style="left:729px;top:546px;width:11px;height:1px;background:#555"></div>
  <div style="left:723px;top:550px;width:5px;height:4px;background:#f4f4e8"></div>
  <div style="left:729px;top:551px;width:7px;height:1px;background:#444"></div>
  <div style="left:723px;top:554px;width:5px;height:4px;background:#a8b888"></div>
  <div style="left:729px;top:555px;width:7px;height:1px;background:#888"></div>
  <div style="left:723px;top:559px;width:5px;height:4px;background:#f0f0f0"></div>
  <div style="left:729px;top:560px;width:6px;height:1px;background:#999"></div>
  <div style="left:723px;top:563px;width:5px;height:4px;background:#4a78c8"></div>
  <div style="left:729px;top:564px;width:17px;height:1px;background:#444"></div>
  <div style="left:723px;top:568px;width:5px;height:3px;background:#3a68c0"></div>
  <div style="left:729px;top:569px;width:7px;height:1px;background:#555"></div>
  <div style="left:718px;top:574px;width:46px;height:1px;background:#c0c8d4"></div>
  <div style="left:720px;top:579px;width:12px;height:3px;border-radius:2px;background:#c4d0e0"></div>
  <div style="left:720px;top:584px;width:12px;height:3px;border-radius:2px;background:#c4d0e0"></div>
  <div style="left:720px;top:588px;width:12px;height:3px;border-radius:2px;background:#c4d0e0"></div>
  <div style="left:720px;top:593px;width:12px;height:3px;border-radius:2px;background:#c4d0e0"></div>
  <div style="left:720px;top:597px;width:12px;height:3px;border-radius:2px;background:#c4d0e0"></div>
  <!-- sheet -->
  <div style="left:764px;top:447px;width:250px;height:154px;background:#fff"></div>
  <div style="left:764px;top:447px;width:243px;height:5px;background:linear-gradient(#e4e4e4,#cfcfcf);border-bottom:1px solid #aaa"></div>
  <div style="left:788px;top:447px;width:18px;height:5px;background:linear-gradient(#c8ccd4,#b8bcc4)"></div>
  <div style="left:764px;top:452px;width:6px;height:146px;background:#d8d8d8"></div>
  <div style="left:765px;top:453px;width:4px;height:144px;background:repeating-linear-gradient(#888 0,#888 1px,transparent 1px,transparent 4.6px);opacity:.6"></div>
  <div style="left:770px;top:452px;width:18px;height:146px;background:#ececec"></div>
  <div style="left:770px;top:452px;width:234px;height:146px;background:repeating-linear-gradient(transparent 0,transparent 3.6px,#f2f2f2 3.6px,#f2f2f2 4.6px)"></div>
  <div style="left:770px;top:466px;width:234px;height:1px;background:#dcdcdc"></div>
  <div style="left:770px;top:477px;width:234px;height:1px;background:#dcdcdc"></div>
  <div style="left:770px;top:479px;width:234px;height:1px;background:#dcdcdc"></div>
  <div style="left:770px;top:490px;width:234px;height:1px;background:#dcdcdc"></div>
  <div style="left:770px;top:502px;width:234px;height:1px;background:#dcdcdc"></div>
  <div style="left:770px;top:504px;width:234px;height:1px;background:#dcdcdc"></div>
  <div style="left:770px;top:515px;width:234px;height:1px;background:#dcdcdc"></div>
  <div style="left:770px;top:530px;width:234px;height:1px;background:#dcdcdc"></div>
  <div style="left:770px;top:540px;width:234px;height:1px;background:#dcdcdc"></div>
  <div style="left:770px;top:554px;width:234px;height:1px;background:#dcdcdc"></div>
  <div style="left:770px;top:565px;width:234px;height:1px;background:#dcdcdc"></div>
  <div style="left:770px;top:568px;width:234px;height:1px;background:#dcdcdc"></div>
  <div style="left:770px;top:575px;width:234px;height:1px;background:#dcdcdc"></div>
  <div style="left:770px;top:579px;width:234px;height:1px;background:#dcdcdc"></div>
  <div style="left:770px;top:587px;width:234px;height:1px;background:#dcdcdc"></div>
  <div style="left:770px;top:589px;width:234px;height:1px;background:#dcdcdc"></div>
  <div style="left:770px;top:594px;width:234px;height:1px;background:#dcdcdc"></div>
  <div style="left:806px;top:452px;width:1px;height:146px;background:#e6e6e6"></div>
  <div style="left:842px;top:452px;width:1px;height:146px;background:#e6e6e6"></div>
  <div style="left:860px;top:452px;width:1px;height:146px;background:#e6e6e6"></div>
  <div style="left:879px;top:452px;width:1px;height:146px;background:#e6e6e6"></div>
  <div style="left:913px;top:452px;width:1px;height:146px;background:#e6e6e6"></div>
  <div style="left:932px;top:452px;width:1px;height:146px;background:#e6e6e6"></div>
  <div style="left:950px;top:452px;width:1px;height:146px;background:#e6e6e6"></div>
  <div style="left:985px;top:452px;width:1px;height:146px;background:#e6e6e6"></div>
  <div style="left:1004px;top:452px;width:1px;height:146px;background:#e6e6e6"></div>
  <div style="left:788px;top:454px;width:18px;height:5px;border:1px solid #8aa0d8;background:#fff"></div>
  <div style="left:764px;top:598px;width:250px;height:4px;background:#f0f0f0;border-top:1px solid #ccc"></div>
  <div style="left:770px;top:599px;width:14px;height:2px;background:#bbb"></div>
  <div style="left:1014px;top:447px;width:4px;height:155px;background:linear-gradient(90deg,#e8e8e8,#fafafa);border-left:1px solid #c8c8c8"></div>
  <div style="left:1015px;top:575px;width:3px;height:12px;background:#c0c0c0"></div>
  <div style="left:1015px;top:590px;width:3px;height:8px;background:#999"></div>
</div></div>


</body></html>
